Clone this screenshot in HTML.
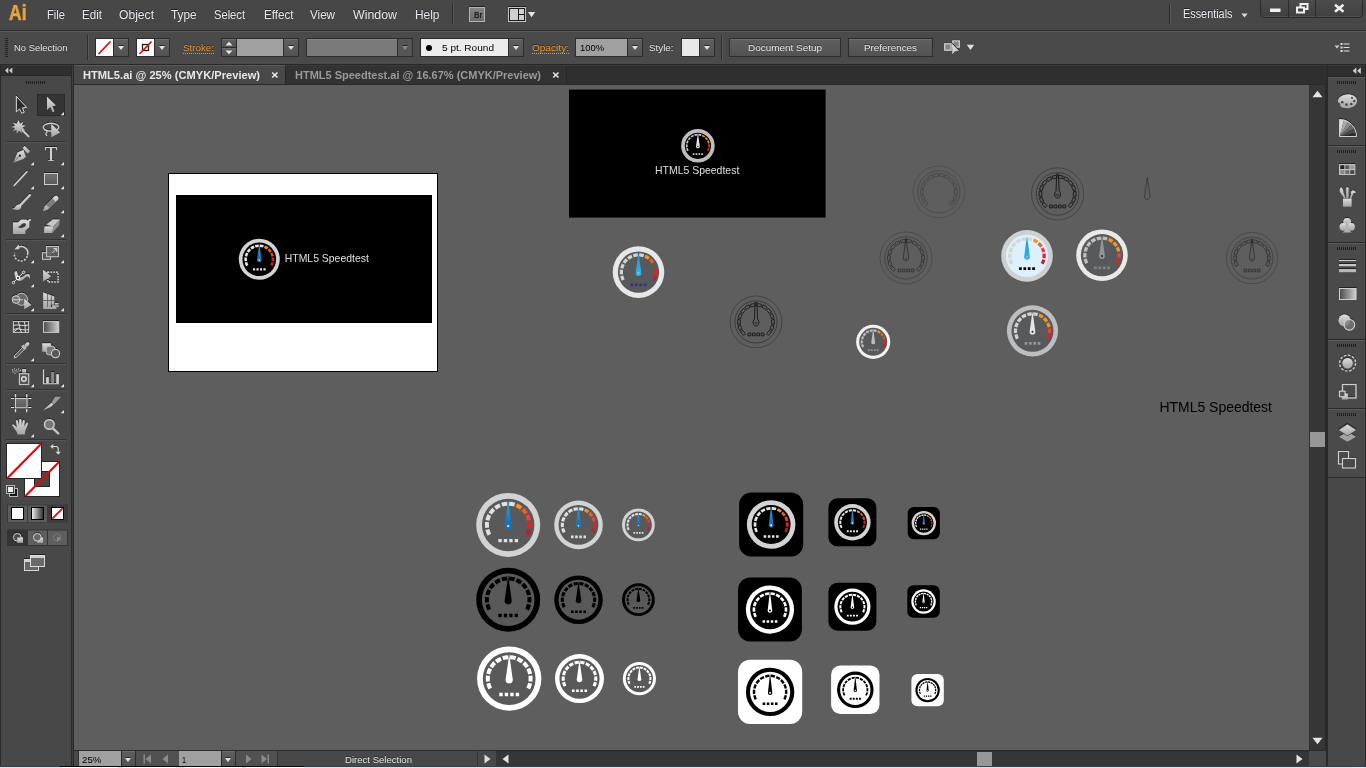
<!DOCTYPE html>
<html lang="en">
<head>
<meta charset="utf-8">
<title>Adobe Illustrator - HTML5.ai</title>
<style>
*{box-sizing:border-box;margin:0;padding:0}
html,body{width:1366px;height:768px;overflow:hidden;background:#484848}
body{font-family:"Liberation Sans",sans-serif;font-size:12px;color:#e6e6e6}
#app{position:relative;width:1366px;height:768px;overflow:hidden;background:#484848}
.abs{position:absolute}
.t{position:absolute;white-space:nowrap;line-height:1;transform-origin:0 0}
/* menu bar */
#menubar{position:absolute;left:0;top:0;width:1366px;height:30px;background:#474747}
#menubar .mi{position:absolute;top:8px;font-size:12px;color:#e6eaf0;text-shadow:0 -1px 0 rgba(20,20,20,.7);white-space:nowrap;line-height:14px;transform-origin:0 50%}
#ailogo{position:absolute;left:8.5px;top:1px;font-size:21.5px;font-weight:bold;line-height:24px;color:#eaa53f;transform-origin:0 0;-webkit-text-stroke:.7px #e39a33;text-shadow:0 -1px 0 #2c2c2c}
.vsep{position:absolute;width:2px;border-left:1px solid #2e2e2e;border-right:1px solid #565656}
/* control bar */
#ctrlbar{position:absolute;left:0;top:30px;width:1366px;height:35px;background:#4a4a4a;border-top:1px solid #2b2b2b;border-bottom:1px solid #282828;box-shadow:inset 0 1px 0 #5c5c5c}
.btn{position:absolute;border:1px solid #2c2c2c;background:linear-gradient(#5f5f5f,#525252);box-shadow:inset 0 1px 0 #6c6c6c}
.field{position:absolute;border:1px solid #2c2c2c}
.lbl{position:absolute;font-size:9.7px;text-shadow:0 -1px 0 rgba(20,20,20,.6);line-height:12px;white-space:nowrap;color:#e2e6ea;transform-origin:0 50%}
.lbl.or{color:#e8962e}
.tri{position:absolute;width:0;height:0;margin-left:.5px;border-left:3.5px solid transparent;border-right:3.5px solid transparent;border-top:4.5px solid #e2e2e2;filter:drop-shadow(0 -1px 0 #2a2a2a)}
/* tab bar */
#tabbar{position:absolute;left:74px;top:65px;width:1252px;height:20px;background:#2f2f2f;border-top:1px solid #3a3a3a;border-bottom:1px solid #2a2a2a}
.tab{position:absolute;top:0;height:20px}
/* canvas */
#canvas{position:absolute;left:74px;top:85px;width:1235px;height:665px;background:#5e5e5e;overflow:hidden}
#canvas svg{position:absolute;left:0;top:0}

.lbl.dk{color:#000;text-shadow:none}

</style>
</head>
<body>
<div id="app">
<!-- ======= MENU BAR ======= -->
<div id="menubar">
  <div id="ailogo" style="left:8.5px;transform:scaleX(0.8140)">Ai</div>
  <div class="mi" style="left:47px;transform:scaleX(0.9305)">File</div>
  <div class="mi" style="left:82px;transform:scaleX(0.9668)">Edit</div>
  <div class="mi" style="left:119px;transform:scaleX(1.0090)">Object</div>
  <div class="mi" style="left:171px;transform:scaleX(0.9802)">Type</div>
  <div class="mi" style="left:214px;transform:scaleX(0.9293)">Select</div>
  <div class="mi" style="left:263.5px;transform:scaleX(0.9682)">Effect</div>
  <div class="mi" style="left:310px;transform:scaleX(0.9691)">View</div>
  <div class="mi" style="left:353px;transform:scaleX(1.0307)">Window</div>
  <div class="mi" style="left:414.5px;transform:scaleX(0.9924)">Help</div>
  <div class="vsep" style="left:452px;top:4px;height:20px"></div>
  <div class="abs" id="brbtn" style="left:469px;top:7px;width:16px;height:15px;border:1px solid #b4b4b4;background:linear-gradient(#858585,#6a6a6a);box-shadow:0 -1px 0 #222"><span class="t" style="left:3.500px;top:3px;font-size:8.500px;font-weight:bold;color:#1c1c1c;transform:scaleX(0.8992)">Br</span></div>
  <svg class="abs" style="left:507px;top:5px" width="30" height="18" viewBox="0 0 30 18">
    <rect x="1" y="1" width="18" height="1" fill="#222"/>
    <rect x="1.500" y="2.500" width="17" height="14" fill="#1a1a1a" stroke="#c4c4c4" stroke-width="1"/>
    <rect x="3" y="4" width="8" height="11" fill="#cfcfcf"/>
    <rect x="12" y="4" width="5" height="5" fill="#cfcfcf"/>
    <rect x="12" y="10" width="5" height="5" fill="#cfcfcf"/>
    <path d="M21 7h7.200l-3.600 5.200z" fill="#e6e6e6"/>
  </svg>
  <div class="vsep" style="left:1169px;top:4px;height:20px"></div>
  <div class="mi" style="left:1182.5px;top:7px;transform:scaleX(0.9049)">Essentials</div>
  <svg class="abs" style="left:1241px;top:13px" width="7" height="5" viewBox="0 0 7 5"><path d="M0.3 0.5h6.4L3.5 4.5z" fill="#d8d8d8"/></svg>
  <!-- window buttons -->
  <div class="abs" id="winbtns" style="left:1260px;top:-1px;width:103px;height:19px;border:1px solid #2a2a2a;border-radius:0 0 4px 4px;background:linear-gradient(#4d4d4d,#3f3f3f);box-shadow:inset 0 -1px 0 #505050"></div>
  <div class="abs" style="left:1288px;top:0;width:1px;height:17px;background:#2a2a2a"></div>
  <div class="abs" style="left:1315px;top:0;width:1px;height:17px;background:#2a2a2a"></div>
  <svg class="abs" style="left:1260px;top:0" width="103" height="18" viewBox="0 0 103 18">
    <rect x="10" y="8.5" width="10.5" height="3.5" fill="#f0f0f0"/>
    <g fill="none" stroke="#f0f0f0" stroke-width="2"><rect x="40.5" y="4" width="7" height="5"/><rect x="37" y="7.5" width="7" height="5" fill="#464646"/></g>
    <path d="M75 4.800l8.500 7M83.500 4.800l-8.500 7" stroke="#f0f0f0" stroke-width="2.500" fill="none"/>
  </svg>
</div>

<!-- ======= CONTROL BAR ======= -->
<div id="ctrlbar">
  <svg class="abs" style="left:4px;top:6px" width="5" height="22" viewBox="0 0 5 22"><g fill="#232323"><rect x="1" y="1" width="3" height="1"/><rect x="1" y="3" width="3" height="1"/><rect x="1" y="5" width="3" height="1"/><rect x="1" y="7" width="3" height="1"/><rect x="1" y="9" width="3" height="1"/><rect x="1" y="11" width="3" height="1"/><rect x="1" y="13" width="3" height="1"/><rect x="1" y="15" width="3" height="1"/><rect x="1" y="17" width="3" height="1"/><rect x="1" y="19" width="3" height="1"/></g></svg>
  <div class="lbl" style="left:14px;top:11px;transform:scaleX(0.9738)">No Selection</div>
  <div class="vsep" style="left:87px;top:4px;height:25px"></div>
  <!-- fill swatch -->
  <div class="field" style="left:95px;top:7px;width:19px;height:19px;background:#fff"></div>
  <svg class="abs" style="left:96px;top:8px" width="17" height="17" viewBox="0 0 17 17"><path d="M2.5 15L14.5 2.5" stroke="#f00808" stroke-width="1.8"/></svg>
  <div class="btn" style="left:113px;top:7px;width:16px;height:19px"></div><div class="tri" style="left:117px;top:15px"></div>
  <!-- stroke swatch -->
  <div class="field" style="left:136px;top:7px;width:19px;height:19px;background:#fff"></div>
  <svg class="abs" style="left:137px;top:8px" width="17" height="17" viewBox="0 0 17 17"><rect x="5.5" y="5.5" width="6" height="6" fill="none" stroke="#222" stroke-width="1.3"/><path d="M2.5 15L14.5 2.5" stroke="#f00808" stroke-width="1.8"/></svg>
  <div class="btn" style="left:154px;top:7px;width:16px;height:19px"></div><div class="tri" style="left:158px;top:15px"></div>
  <div class="lbl or" style="left:183px;top:11px;transform:scaleX(1.0097)">Stroke:</div>
  <div class="abs" style="left:183px;top:22px;width:31px;height:0;border-top:1px dotted #e8962e"></div>
  <!-- spinner -->
  <div class="btn" style="left:221px;top:7px;width:16px;height:10px"></div>
  <div class="btn" style="left:221px;top:16px;width:16px;height:10px"></div>
  <svg class="abs" style="left:225px;top:10px" width="8" height="14" viewBox="0 0 8 14"><path d="M0.5 4.5h7L4 0.8z M0.5 9.5h7L4 13.2z" fill="#e6e6e6"/></svg>
  <div class="field" style="left:236px;top:7px;width:48px;height:19px;background:#a0a0a0"></div>
  <div class="btn" style="left:283px;top:7px;width:16px;height:19px"></div><div class="tri" style="left:287px;top:15px"></div>
  <!-- variable width profile (disabled) -->
  <div class="field" style="left:306px;top:7px;width:92px;height:19px;background:#7a7a7a;box-shadow:inset 0 1px 0 #868686"></div>
  <div class="btn" style="left:397px;top:7px;width:16px;height:19px;background:#555;box-shadow:none"></div><div class="tri" style="left:401px;top:15px;border-top-color:#8a8a8a"></div>
  <!-- brush definition -->
  <div class="field" style="left:420px;top:7px;width:89px;height:19px;background:#ececec"></div>
  <div class="abs" style="left:426px;top:13.5px;width:6px;height:6px;border-radius:50%;background:#000"></div>
  <div class="lbl dk" style="left:442px;top:11px;transform:scaleX(1.0381)">5 pt. Round</div>
  <div class="btn" style="left:508px;top:7px;width:16px;height:19px"></div><div class="tri" style="left:512px;top:15px"></div>
  <div class="lbl or" style="left:532px;top:11px;transform:scaleX(1.0409)">Opacity:</div>
  <div class="abs" style="left:532px;top:22px;width:37px;height:0;border-top:1px dotted #e8962e"></div>
  <div class="field" style="left:575px;top:7px;width:53px;height:19px;background:#a0a0a0"></div>
  <div class="lbl dk" style="left:579.5px;top:11px;transform:scaleX(0.9685)">100%</div>
  <div class="btn" style="left:627px;top:7px;width:16px;height:19px"></div><div class="tri" style="left:631px;top:15px"></div>
  <div class="lbl" style="left:648.5px;top:11px;transform:scaleX(1.0110)">Style:</div>
  <div class="field" style="left:681px;top:7px;width:19px;height:19px;background:#e8e8e8"></div>
  <div class="btn" style="left:699px;top:7px;width:16px;height:19px"></div><div class="tri" style="left:703px;top:15px"></div>
  <div class="vsep" style="left:721px;top:4px;height:25px"></div>
  <div class="btn" style="left:729px;top:7px;width:112px;height:19px"></div>
  <div class="lbl" style="left:748px;top:11px;transform:scaleX(1.0253)">Document Setup</div>
  <div class="btn" style="left:848px;top:7px;width:85px;height:19px"></div>
  <div class="lbl" style="left:864px;top:11px;transform:scaleX(1.0147)">Preferences</div>
  <svg class="abs" style="left:943px;top:8px" width="20" height="17" viewBox="0 0 20 17">
    <rect x="1.700" y="3.800" width="6.400" height="1" fill="#222"/><rect x="9.800" y="0.900" width="6.500" height="1" fill="#222"/>
    <rect x="1.700" y="4.800" width="6.400" height="6.400" fill="#858585" stroke="#d4d4d4" stroke-width="1.200"/>
    <rect x="9.800" y="1.900" width="6.500" height="6.300" fill="#858585" stroke="#d4d4d4" stroke-width="1.200"/>
    <path d="M9.100 4.200L9.300 15.200L12 12.300L16.200 11.500Z" fill="#d2d2d2"/>
    <path d="M9.100 4.200L16.200 11.500" stroke="#1c1c1c" stroke-width="1" fill="none"/>
  </svg>
  <svg class="abs" style="left:966px;top:12.800px" width="9" height="7" viewBox="0 0 9 7"><path d="M0.8 0.8h7.4L4.5 6z" fill="#e0e0e0"/></svg>
  <svg class="abs" style="left:1334px;top:11px" width="17" height="11" viewBox="0 0 17 11"><path d="M0.5 3.5h5L3 6.5z" fill="#d0d0d0"/><g fill="#dcdcdc"><rect x="6.5" y="1" width="2" height="2"/><rect x="9.5" y="1.5" width="6" height="1"/><rect x="6.5" y="4.5" width="2" height="2"/><rect x="9.5" y="5" width="6" height="1"/><rect x="6.5" y="8" width="2" height="2"/><rect x="9.5" y="8.5" width="6" height="1"/></g></svg>
</div>

<!-- ======= DOCUMENT TABS ======= -->
<div id="tabbar">
  <div class="tab" style="left:0;width:212px;background:#484848;border-right:1px solid #262626;top:-1px;height:19px;border-top:1px solid #5a5a5a"></div>
  <div class="t" style="left:9px;top:4px;font-size:10.500px;font-weight:bold;color:#e8e8e8;transform:scaleX(1.0586)">HTML5.ai @ 25% (CMYK/Preview)</div>
  <svg class="abs" style="left:197px;top:5px" width="8" height="8" viewBox="0 0 8 8"><path d="M1.2 1.5l5.3 5M6.500 1.5l-5.300 5" stroke="#ececec" stroke-width="1.6"/></svg>
  <div class="tab" style="left:212px;width:281px;background:#323232;border-right:1px solid #262626;top:0;height:18px"></div>
  <div class="t" style="left:221px;top:4px;font-size:10.500px;font-weight:bold;color:#9a9a9a;transform:scaleX(1.0472)">HTML5 Speedtest.ai @ 16.67% (CMYK/Preview)</div>
  <svg class="abs" style="left:478px;top:5px" width="8" height="8" viewBox="0 0 8 8"><path d="M1.2 1.5l5.300 5M6.500 1.5l-5.300 5" stroke="#e4e4e4" stroke-width="1.6"/></svg>
</div>

<!-- ======= SCROLLBARS / STATUS ======= -->
<div class="abs" id="vscroll" style="left:1309px;top:85px;width:17px;height:665px;background:#363636;border-left:1px solid #2e2e2e;border-right:1px solid #2a2a2a"></div>
<svg class="abs" style="left:1312px;top:90px" width="11" height="8" viewBox="0 0 11 8"><path d="M0.5 7.2h10L5.5 0.8z" fill="#e4e4e4"/></svg>
<svg class="abs" style="left:1312px;top:737px" width="11" height="8" viewBox="0 0 11 8"><path d="M0.5 0.8h10L5.5 7.2z" fill="#e4e4e4"/></svg>
<div class="abs" style="left:1310px;top:432px;width:15px;height:15px;background:#979797"></div>

<div class="abs" id="statusbar" style="left:74px;top:750px;width:1252px;height:16px;background:#484848;border-top:1px solid #2c2c2c"></div>
<div class="abs" style="left:78px;top:751px;width:43px;height:15px;background:#a0a0a0;border-left:1px solid #333"></div>
<div class="lbl dk" style="left:82px;top:754px;transform:scaleX(1.0056)">25%</div>
<div class="btn" style="left:121px;top:750px;width:15px;height:17px"></div><div class="tri" style="left:124px;top:758px"></div>
<div class="abs" style="left:136px;top:751px;width:43px;height:15px;background:#515151"></div>
<svg class="abs" style="left:143px;top:754px" width="30" height="10" viewBox="0 0 30 10"><g fill="#8a8a8a"><rect x="0.5" y="0.5" width="1.5" height="9"/><path d="M8 0.5v9L2.5 5z"/><path d="M25 0.5v9L19.5 5z"/></g></svg>
<div class="abs" style="left:179px;top:751px;width:42px;height:15px;background:#a0a0a0"></div>
<div class="lbl dk" style="left:182px;top:754px;transform:scaleX(0.7420)">1</div>
<div class="btn" style="left:221px;top:750px;width:15px;height:17px"></div><div class="tri" style="left:224px;top:758px"></div>
<div class="abs" style="left:236px;top:751px;width:42px;height:15px;background:#515151;border-right:1px solid #333"></div>
<svg class="abs" style="left:245px;top:754px" width="30" height="10" viewBox="0 0 30 10"><g fill="#8a8a8a"><path d="M1 0.5v9L6.5 5z"/><path d="M16.5 0.5v9L22 5z"/><rect x="22.5" y="0.5" width="1.5" height="9"/></g></svg>
<div class="lbl" style="left:344.5px;top:754px;transform:scaleX(0.9876)">Direct Selection</div>
<div class="abs" style="left:477px;top:751px;width:1px;height:15px;background:#333"></div>
<svg class="abs" style="left:484px;top:754px" width="7" height="10" viewBox="0 0 7 10"><path d="M0.5 0.5v9L6.5 5z" fill="#dcdcdc"/></svg>
<div class="abs" id="hscroll" style="left:496px;top:751px;width:813px;height:15px;background:#363636;border-top:1px solid #303030"></div>
<svg class="abs" style="left:502px;top:754px" width="7" height="10" viewBox="0 0 7 10"><path d="M6.5 0.5v9L0.5 5z" fill="#e4e4e4"/></svg>
<svg class="abs" style="left:1296px;top:754px" width="7" height="10" viewBox="0 0 7 10"><path d="M0.5 0.5v9L6.5 5z" fill="#e4e4e4"/></svg>
<div class="abs" style="left:977px;top:752px;width:15px;height:14px;background:#979797"></div>
<div class="abs" style="left:1309px;top:751px;width:16px;height:15px;background:#4a4a4a"></div>

<!-- bottom 2px strip (window edge) -->
<div class="abs" style="left:0;top:766px;width:1366px;height:1px;background:#36414e"></div>
<div class="abs" style="left:0;top:767px;width:1366px;height:1px;background:#d4e4f6"></div>
<div class="abs" style="left:60px;top:766px;width:244px;height:1px;background:#0a0a0a"></div>
<div class="abs" style="left:60.5px;top:767px;width:57.5px;height:1px;background:#fff"></div>
<div class="abs" style="left:122.5px;top:767px;width:53.5px;height:1px;background:#fff"></div>
<div class="abs" style="left:183.5px;top:767px;width:58.5px;height:1px;background:#fff"></div>
<div class="abs" style="left:246px;top:767px;width:57.500px;height:1px;background:#fff"></div>
<div class="abs" style="left:1352px;top:767px;width:13px;height:1px;background:#e8e8e8"></div>

<!-- ======= TOOLS PANEL ======= -->
<div class="abs" id="toolpanel" style="left:0;top:65px;width:74px;height:701px;background:#484848;border-left:1px solid #2a2a2a"></div>
<div class="abs" style="left:71px;top:65px;width:3px;height:701px;background:#2a2a2a"></div>
<div class="abs" style="left:72px;top:65px;width:1px;height:701px;background:#3e3e3e"></div>
<div class="abs" style="left:1px;top:65px;width:70px;height:11px;background:#2f2f2f;border-top:1px solid #3a3a3a;border-bottom:1px solid #282828"></div>
<svg class="abs" id="toolsvg" style="left:0;top:0" width="74" height="600" viewBox="0 0 74 600">
  <defs>
    <linearGradient id="gi" x1="0" y1="0" x2="0" y2="1"><stop offset="0" stop-color="#dcdcdc"/><stop offset="1" stop-color="#a4a4a4"/></linearGradient>
    <linearGradient id="gd" x1="0" y1="0" x2="0" y2="1"><stop offset="0" stop-color="#727272"/><stop offset="1" stop-color="#5a5a5a"/></linearGradient>
    <linearGradient id="gh" x1="0" y1="0" x2="1" y2="0"><stop offset="0" stop-color="#4a4a4a"/><stop offset="1" stop-color="#d0d0d0"/></linearGradient>
    <linearGradient id="gw" x1="0" y1="0" x2="1" y2="0"><stop offset="0" stop-color="#f4f4f4"/><stop offset="1" stop-color="#2a2a2a"/></linearGradient>
    <filter id="sh" x="-10%" y="-10%" width="120%" height="120%"><feDropShadow dx="0" dy="-1" stdDeviation="0" flood-color="#1c1c1c" flood-opacity="0.9"/></filter>
  </defs>
  <!-- collapse arrows + grip -->
  <path d="M8.3 67.5v6L5 70.5z M12.3 67.5v6L9 70.5z" fill="#d0d0d0"/>
  <g fill="#202020"><rect x="26" y="81" width="1" height="3"/><rect x="28" y="81" width="1" height="3"/><rect x="30" y="81" width="1" height="3"/><rect x="32" y="81" width="1" height="3"/><rect x="34" y="81" width="1" height="3"/><rect x="36" y="81" width="1" height="3"/><rect x="38" y="81" width="1" height="3"/><rect x="40" y="81" width="1" height="3"/><rect x="42" y="81" width="1" height="3"/><rect x="44" y="81" width="1" height="3"/></g>
  <!-- selected tool bg -->
  <rect x="37.5" y="94.5" width="27" height="21" fill="#343434" stroke="#2a2a2a"/>
  <!-- separators -->
  <g id="tsep"><path d="M6 141.5h60M6 239.5h60M6 313.5h60M6 363.5h60M6 389.5h60M6 439.5h60" stroke="#333" stroke-width="1"/><path d="M6 142.5h60M6 240.5h60M6 314.5h60M6 364.5h60M6 390.5h60M6 440.5h60" stroke="#555" stroke-width="1"/></g>
  <!-- flyout triangles -->
  <g fill="#e8e8e8" id="fly">
    <path d="M64 112v3.3h-3.3z"/>
    <path d="M34 162v3.3h-3.3z M64 162v3.3h-3.3z"/>
    <path d="M34 186v3.3h-3.3z M64 186v3.3h-3.3z"/>
    <path d="M64 210v3.3h-3.3z"/>
    <path d="M64 234v3.3h-3.3z"/>
    <path d="M34 260v3.3h-3.3z M64 260v3.3h-3.3z"/>
    <path d="M34 284v3.3h-3.3z"/>
    <path d="M34 308v3.3h-3.3z M64 308v3.3h-3.3z"/>
    <path d="M34 358v3.3h-3.3z"/>
    <path d="M34 384v3.3h-3.3z M64 384v3.3h-3.3z"/>
    <path d="M64 410v3.3h-3.3z"/>
    <path d="M34 434v3.3h-3.3z"/>
  </g>
  <g filter="url(#sh)">
  <!-- row1: selection, direct selection -->
  <path d="M16.4 96.3V111.8L19.6 108.9L21.8 113.4L24.3 112.2L22.2 107.9L26.6 107.4Z" fill="#2c2c2c" stroke="#d4d4d4" stroke-width="1" stroke-linejoin="miter"/>
  </g>
  <path d="M47 96.8V110L50.3 107L52.6 112.3L54.6 111.4L52.4 106.3L56 105.6Z" fill="url(#gi)"/>
  <g filter="url(#sh)">
  <!-- row2: magic wand, lasso -->
  <path d="M18.7 120.2l1.2 3.7 3.3-2.2-1.3 3.6 3.9.1-3.3 2.1 2.7 2.7-3.8-.6.2 3.9-2.5-3-2.3 3.2-.2-3.9-3.7 1.1 2.3-3-3.8-1 3.7-1.100-2.100-3.300 3.600 1.400z" fill="url(#gi)"/>
  <path d="M22.5 130.2l6 6.200" stroke="#c4c4c4" stroke-width="2" stroke-linecap="round"/>
  <ellipse cx="51" cy="127.300" rx="7.800" ry="3.900" fill="none" stroke="#cfcfcf" stroke-width="1.200"/>
  <path d="M44.500 130.300c2.500-.5 3.200 1.500 1.700 2.800-1 .9.300 2.300 1 2.600" fill="none" stroke="#cfcfcf" stroke-width="1.100"/>
  <path d="M51.300 124v13.200l8.800-4.800z" fill="url(#gi)"/>
  <!-- row3: pen, type -->
  <path d="M13.300 162.800l4.300-10.200 5.800-2.500 2.400 6.600-2.400 2.300z" fill="url(#gi)"/>
  <path d="M24.600 145.900l5.400 5.400-2.300 2.400-5-5.500z" fill="url(#gi)"/>
  <path d="M13.600 162.400l5.800-6.400" stroke="#555" stroke-width=".7"/>
  <circle cx="19.900" cy="155.700" r="1.100" fill="#222"/>
  <!-- row4: line, rect -->
  <path d="M14.200 185.600L27 171.800" stroke="#d0d0d0" stroke-width="1.500" stroke-linecap="round"/>
  <rect x="44.500" y="173.500" width="13" height="11" fill="url(#gd)" stroke="#cacaca" stroke-width="1"/>
  <!-- row5: brush, pencil -->
  <path d="M29.900 195.200L20.800 204.800" stroke="#c8c8c8" stroke-width="2.300" stroke-linecap="round"/>
  <path d="M20.900 204.800c-2.500-.8-4.700.8-5.600 2.300-.8 1.200-2 1.400-3.200 1.400 1.800 1.600 5.300 1.800 7.400 1 1.800-.900 2.100-3.100 1.400-4.700z" fill="url(#gi)"/>
  <path d="M43 211.200l1.700-4.700 9.700-10c1.100-1.100 2.700-.800 3.500.2.700.900.800 2.200-.200 3.200l-10 9.600z" fill="url(#gi)"/>
  <path d="M46 204.800l3.500 3.300 6.300-6.100-3.400-3.500z" fill="#7c7c7c"/>
  <!-- row6: blob brush, eraser -->
  <path d="M13 222.500h5l3-2.800h5.500l2.800 2.500v5l-4 3.600v3.200H13z" fill="url(#gi)"/>
  <path d="M30.600 219.300l-5.100 4.600" stroke="#d8d8d8" stroke-width="1.700"/>
  <path d="M25.700 223.500c-2-.5-3.600.2-4.700 1.500-.9 1-2.200 1.700-3.500 1.900 1.700 1.300 4.700 1.400 6.700.2 1.600-.9 2.100-2.400 1.500-3.600z" fill="#3a3a3a"/>
  <path d="M46.300 224.600l6.700-5h7l-6.800 7z" fill="#c6c6c6"/>
  <path d="M43.800 232.900l.8-6.300 8.600-.2-.9 6.500z" fill="url(#gi)"/>
  <path d="M53.200 226.600l6.800-7-.9 5.700-6.800 7.600z" fill="#8e8e8e"/>
  <!-- row7: rotate, scale -->
  <path d="M17.500 247.800a6.500 6.500 0 0 1 9.900 7.500" fill="none" stroke="#cfcfcf" stroke-width="1.400"/>
  <path d="M27.200 256.300a6.500 6.500 0 0 1-12.600-3.600" fill="none" stroke="#cfcfcf" stroke-width="1.500" stroke-dasharray="1.800 1.500"/>
  <path d="M14.400 249.400l4.300-5 .7 4.700z" fill="#cfcfcf"/>
  <rect x="42.500" y="252.700" width="8" height="6.600" fill="#565656" stroke="#c8c8c8" stroke-width="1"/>
  <rect x="46.600" y="246.500" width="11.800" height="10.200" fill="url(#gd)" fill-opacity=".85" stroke="#c8c8c8" stroke-width="1"/>
  <path d="M52.300 253l4.200-4.200M53.500 248.600h3.200v3.200" fill="none" stroke="#d8d8d8" stroke-width="1"/>
  <!-- row8: width, free transform -->
  <path d="M14.500 273.500c.3-2.500 2.300-3 2.700-.8.500 2.600 1.300 4.700 3.300 4.700 3.300 0 4.700-3.300 7.500-3.300 1.900 0 2.300 2.300 1.900 5.200-.800-2.300-1.600-3-2.700-3-2 0-3.700 4.700-7.500 4.700-3.700 0-4.700-4.400-5.200-7.500z" fill="url(#gi)"/>
  <path d="M13.300 282.600L23.500 272.400" stroke="#f0f0f0" stroke-width=".9"/>
  <circle cx="13.400" cy="282.600" r="1.200" fill="#484848" stroke="#f0f0f0" stroke-width=".8"/>
  <circle cx="23.600" cy="272.300" r="1.200" fill="#484848" stroke="#f0f0f0" stroke-width=".8"/>
  <circle cx="18" cy="278" r="1.700" fill="#484848" stroke="#f8f8f8" stroke-width="1.100"/>
  <rect x="47.800" y="272.300" width="10.300" height="9.700" fill="none" stroke="#d8d8d8" stroke-width="1.400" stroke-dasharray="1.500 1.300"/>
  <path d="M43.100 269.700v11.800l8-5.300z" fill="url(#gi)"/>
  <!-- row9: shape builder, perspective grid -->
  <circle cx="21.500" cy="299.300" r="6" fill="#6a6a6a" stroke="#bdbdbd" stroke-width="1"/>
  <circle cx="16" cy="299.600" r="3.800" fill="#787878" stroke="#cfcfcf" stroke-width="1"/>
  <path d="M13.500 299.600h10" stroke="#f4f4f4" stroke-width="1.100" stroke-dasharray="1 1"/>
  <path d="M24.200 298.800v10.500l7.200-4.300z" fill="url(#gi)"/>
  <path d="M43.200 292.500l11 4v8.500h-3.500v2h5.700v2H43.200z" fill="url(#gi)"/>
  <path d="M47.600 294v13M51.300 295.500v9.500M43.200 300.500h11M54.200 303.300h4.600M50.800 305h7.500" stroke="#505050" stroke-width=".8" fill="none"/>
  <path d="M55 303l3.500 .1v1.500h-3.600z M52 305.500h6.800v1.300H52z" fill="#c8c8c8"/>
  <!-- row10: mesh, gradient -->
  <rect x="13.400" y="321.600" width="15.200" height="10.800" fill="#3e3e3e" stroke="#c8c8c8" stroke-width="1"/>
  <path d="M13.500 325.500c4-1.500 8 1 15 -.5M13.500 329.500c5-2 9 1.500 15 0M18 321.500c2 3 1 7 3.500 11M24 321.500c2 3.500.5 7 1.500 11M13.500 332l5-4" fill="none" stroke="#e0e0e0" stroke-width="1"/>
  <rect x="43.500" y="321.600" width="15.200" height="10.800" fill="url(#gh)" stroke="#c8c8c8" stroke-width="1"/>
  <!-- row11: eyedropper, blend -->
  <path d="M14.200 357.800l.5-2.200 8.300-8.500 1.900 1.800-8.500 8.400z" fill="#555" stroke="#d0d0d0" stroke-width=".9"/>
  <path d="M21.200 346.600l2.100-2.100 3.300 3.400-2 2z" fill="#bdbdbd"/>
  <path d="M24.300 345.200l2-2.300c1-1 2.400-.6 2.800.2.400.800.200 1.700-.5 2.400l-2.300 2z" fill="url(#gi)"/>
  <rect x="42.300" y="343.300" width="8.500" height="8.500" fill="url(#gi)"/>
  <rect x="46.300" y="346.300" width="8.500" height="8.500" rx="2.500" fill="#7a7a7a" stroke="#c4c4c4" stroke-width="1"/>
  <circle cx="55.500" cy="353.600" r="4.100" fill="#585858" stroke="#d0d0d0" stroke-width="1.100"/>
  <!-- row12: symbol sprayer, graph -->
  <rect x="19.400" y="373.800" width="9.300" height="10.800" fill="#555" stroke="#cfcfcf" stroke-width="1"/>
  <rect x="22.200" y="369.200" width="3.800" height="3.400" fill="url(#gi)"/>
  <circle cx="23.900" cy="379" r="2.300" fill="none" stroke="#dadada" stroke-width="1.500"/>
  
  <path d="M43.500 369.500v14.200h15.500" fill="none" stroke="#d4d4d4" stroke-width="1.100"/>
  <rect x="46.200" y="377.200" width="2.600" height="6" fill="#cfcfcf"/>
  <rect x="51.300" y="372" width="2.600" height="11.200" fill="#8a8a8a"/>
  <rect x="56.300" y="374.300" width="2.600" height="8.900" fill="#cfcfcf"/>
  <!-- row13: artboard, slice -->
  <rect x="15.500" y="398.500" width="11.500" height="9.200" fill="url(#gd)" stroke="#d0d0d0" stroke-width="1"/>
  <path d="M15.500 394v3.200M26.700 394v3.200M15.500 409v3.200M26.700 409v3.200M11 398.500h3.200M28.200 398.500h3.200M11 407.500h3.200M28.200 407.500h3.200" stroke="#e0e0e0" stroke-width="1.200"/>
  <path d="M43 409.900l8.500-7.200 1.800 1.800c-1 2.200-5 4.200-10.300 5.400z" fill="url(#gi)"/>
  <path d="M51.800 402.300l3.300-5.500h6l-7.200 7.600z" fill="#9a9a9a"/>
  <!-- row14: hand, zoom -->
  <path d="M17.700 434.600l-1.300-3.300-4-5.500c-.5-.9.700-1.800 1.600-1l3 2.700-1-6.300c-.2-1.200 1.500-1.500 1.800-.3l1.300 4.800.2-5.700c0-1.200 1.900-1.200 2 0l.4 5.600 1.200-4.800c.3-1.100 1.900-.8 1.800.3l-.6 5.700 2.200-3.600c.6-1 2.100-.3 1.700.8l-2.500 6.300-.8 4.300z" fill="url(#gi)"/>
  <circle cx="49.300" cy="424.500" r="4.800" fill="#777" stroke="#cdcdcd" stroke-width="1.400"/>
  <path d="M53 428.300l5.200 5" stroke="#c4c4c4" stroke-width="2.400" stroke-linecap="round"/>
  </g>
  <g fill="#e0e0e0"><rect x="12" y="369.500" width="1" height="1"/><rect x="14" y="368.500" width="1" height="1"/><rect x="16" y="369.500" width="1" height="1"/><rect x="18" y="368.500" width="1" height="1"/><rect x="12.500" y="371.500" width="1" height="1"/><rect x="14.500" y="370.500" width="1" height="1"/><rect x="16.500" y="371.500" width="1" height="1"/><rect x="18.500" y="370.500" width="1" height="1"/><rect x="20" y="369.800" width="1" height="1"/><rect x="14.500" y="372.800" width="1" height="1"/></g>
  <!-- T tool as real text -->
  <text x="51" y="161.200" text-anchor="middle" font-family="'Liberation Serif',serif" font-size="20.500" fill="#d2d2d2" filter="url(#sh)">T</text>

  <!-- fill / stroke swatches -->
  <rect x="24.500" y="461.500" width="35" height="35" fill="#fff" stroke="#262626"/>
  <rect x="34.500" y="471.500" width="15" height="15" fill="#484848" stroke="#262626"/>
  <path d="M25.500 496L59 462" stroke="#f80000" stroke-width="2.200"/>
  <rect x="6.500" y="443.500" width="35" height="35" fill="#fff" stroke="#262626"/>
  <path d="M7.500 478L41 444" stroke="#f80000" stroke-width="2.200"/>
  <!-- swap arrows -->
  <path d="M52.500 446.500h3.500c1.800 0 2.200 1 2.200 2.500v3.500" fill="none" stroke="#d8d8d8" stroke-width="1.100"/>
  <path d="M50.200 446.500l3-2.600v5.200z M58.200 454.700l-2.600-3h5.200z" fill="#d8d8d8"/>
  <!-- default fill/stroke -->
  <rect x="9.500" y="488.500" width="8" height="8" fill="#151515" stroke="#b8b8b8" stroke-width="1"/>
  <rect x="6.500" y="485.500" width="8" height="8" fill="#3a3a3a" stroke="#b8b8b8" stroke-width="1"/>
  <rect x="8" y="487" width="5" height="5" fill="#ececec"/>
  <!-- color / gradient / none -->
  <rect x="7" y="504.500" width="61" height="18" fill="#3a3a3a"/>
  <rect x="8" y="505.500" width="19" height="16.500" fill="#5c5c5c"/>
  <rect x="28" y="505.500" width="19" height="16.500" fill="#5c5c5c"/>
  <rect x="48" y="505.500" width="19" height="16.500" fill="#3c3c3c"/>
  <rect x="11.500" y="507.500" width="12" height="12" fill="#fff" stroke="#000" stroke-width="1"/>
  <rect x="31.500" y="507.500" width="12" height="12" fill="url(#gw)" stroke="#000" stroke-width="1"/>
  <rect x="51.500" y="507.500" width="12" height="12" fill="#fff" stroke="#000" stroke-width="1"/>
  <path d="M52.300 518.700L62.700 508.300" stroke="#f80000" stroke-width="1.800"/>
  <!-- drawing modes -->
  <rect x="7" y="529.500" width="61" height="16.500" fill="#343434"/>
  <rect x="28" y="530.500" width="19" height="14.500" fill="#5e5e5e"/>
  <rect x="48" y="530.500" width="19" height="14.500" fill="#5e5e5e"/>
  <g filter="url(#sh)">
  <circle cx="17.300" cy="537.300" r="3.800" fill="#4a4a4a" stroke="#c8c8c8" stroke-width="1"/>
  <rect x="17.200" y="537.500" width="5.800" height="5.300" fill="url(#gi)"/>
  <rect x="37.200" y="537.500" width="5.800" height="5.300" fill="url(#gi)"/>
  <circle cx="37.300" cy="537.300" r="3.800" fill="#666" stroke="#d0d0d0" stroke-width="1"/>
  </g>
  <circle cx="57" cy="537.300" r="3.600" fill="none" stroke="#7a7a7a" stroke-width="1"/>
  <path d="M57 537.300h3.600a3.600 3.600 0 0 1-3.600 3.600z" fill="#8a8a8a"/>
  <!-- screen mode -->
  <g filter="url(#sh)">
  <rect x="24.500" y="559.500" width="14" height="11" fill="#666" stroke="#d8d8d8" stroke-width="1"/>
  <rect x="30.500" y="555.500" width="14" height="11" fill="#6a6a6a" stroke="#dcdcdc" stroke-width="1"/>
  <rect x="31" y="556" width="13" height="2" fill="#cfcfcf"/>
  <rect x="25" y="560" width="5" height="2" fill="#cfcfcf"/>
  </g>
</svg>

<!-- ======= RIGHT DOCK ======= -->
<div class="abs" id="dock" style="left:1326px;top:65px;width:40px;height:701px;background:#484848;border-left:2px solid #2a2a2a;border-right:1px solid #2a2a2a"></div>
<div class="abs" style="left:1328px;top:65px;width:37px;height:12px;background:#2f2f2f;border-top:1px solid #3a3a3a;border-bottom:1px solid #262626"></div>
<div class="abs" style="left:1328px;top:77px;width:37px;height:69px;background:#4a4a4a;border-top:1px solid #5c5c5c;border-bottom:1px solid #2a2a2a"></div>
<div class="abs" style="left:1328px;top:146px;width:37px;height:97px;background:#4a4a4a;border-top:1px solid #5c5c5c;border-bottom:1px solid #2a2a2a"></div>
<div class="abs" style="left:1328px;top:243px;width:37px;height:97px;background:#4a4a4a;border-top:1px solid #5c5c5c;border-bottom:1px solid #2a2a2a"></div>
<div class="abs" style="left:1328px;top:340px;width:37px;height:69px;background:#4a4a4a;border-top:1px solid #5c5c5c;border-bottom:1px solid #2a2a2a"></div>
<div class="abs" style="left:1328px;top:409px;width:37px;height:69px;background:#4a4a4a;border-top:1px solid #5c5c5c;border-bottom:1px solid #2a2a2a"></div>
<svg class="abs" id="docksvg" style="left:0;top:0" width="1366" height="500" viewBox="0 0 1366 500">
  <path d="M1356.300 67.500v6.500l-3.600-3.250z M1360.800 67.500v6.500l-3.600-3.250z" fill="#d4d4d4"/>
  <g fill="#1e1e1e"><rect x="1337" y="81" width="1" height="3"/><rect x="1339" y="81" width="1" height="3"/><rect x="1341" y="81" width="1" height="3"/><rect x="1343" y="81" width="1" height="3"/><rect x="1345" y="81" width="1" height="3"/><rect x="1347" y="81" width="1" height="3"/><rect x="1349" y="81" width="1" height="3"/><rect x="1351" y="81" width="1" height="3"/><rect x="1353" y="81" width="1" height="3"/><rect x="1355" y="81" width="1" height="3"/><rect x="1337" y="150" width="1" height="3"/><rect x="1339" y="150" width="1" height="3"/><rect x="1341" y="150" width="1" height="3"/><rect x="1343" y="150" width="1" height="3"/><rect x="1345" y="150" width="1" height="3"/><rect x="1347" y="150" width="1" height="3"/><rect x="1349" y="150" width="1" height="3"/><rect x="1351" y="150" width="1" height="3"/><rect x="1353" y="150" width="1" height="3"/><rect x="1355" y="150" width="1" height="3"/><rect x="1337" y="247" width="1" height="3"/><rect x="1339" y="247" width="1" height="3"/><rect x="1341" y="247" width="1" height="3"/><rect x="1343" y="247" width="1" height="3"/><rect x="1345" y="247" width="1" height="3"/><rect x="1347" y="247" width="1" height="3"/><rect x="1349" y="247" width="1" height="3"/><rect x="1351" y="247" width="1" height="3"/><rect x="1353" y="247" width="1" height="3"/><rect x="1355" y="247" width="1" height="3"/><rect x="1337" y="344" width="1" height="3"/><rect x="1339" y="344" width="1" height="3"/><rect x="1341" y="344" width="1" height="3"/><rect x="1343" y="344" width="1" height="3"/><rect x="1345" y="344" width="1" height="3"/><rect x="1347" y="344" width="1" height="3"/><rect x="1349" y="344" width="1" height="3"/><rect x="1351" y="344" width="1" height="3"/><rect x="1353" y="344" width="1" height="3"/><rect x="1355" y="344" width="1" height="3"/><rect x="1337" y="413" width="1" height="3"/><rect x="1339" y="413" width="1" height="3"/><rect x="1341" y="413" width="1" height="3"/><rect x="1343" y="413" width="1" height="3"/><rect x="1345" y="413" width="1" height="3"/><rect x="1347" y="413" width="1" height="3"/><rect x="1349" y="413" width="1" height="3"/><rect x="1351" y="413" width="1" height="3"/><rect x="1353" y="413" width="1" height="3"/><rect x="1355" y="413" width="1" height="3"/></g>
  <g filter="url(#sh)">
  <!-- color -->
  <path d="M1338 101.500c0-4 4.500-7 10-7 5 0 9 2.600 9 6.400 0 4.100-4.600 7.300-10.300 7.300-2.200 0-4.300-.3-5.700-1.400-1.200-.900-.2-2.200-1-3.300-.7-.9-2-.8-2-2z" fill="url(#gi)"/>
  <g fill="#444"><circle cx="1342.200" cy="102.300" r="1.300"/><circle cx="1346.500" cy="104.600" r="1.300"/><circle cx="1351.300" cy="104" r="1.300"/><circle cx="1354.300" cy="101" r="1.200"/><circle cx="1352" cy="98" r="1.100"/></g>
  <!-- color guide -->
  <path d="M1339.500 136.500v-17a17 17 0 0 1 17 17z" fill="#2c2c2c"/>
  <path d="M1339.500 136.500v-17a17 17 0 0 1 4.500 .6z" fill="#d8d8d8"/>
  <path d="M1339.500 136.500l4.500-16.400a17 17 0 0 1 4.200 1.800z" fill="#aaa"/>
  <path d="M1339.500 136.500l8.700-14.600a17 17 0 0 1 3.500 2.700z" fill="#8a8a8a"/>
  <path d="M1339.500 136.500l12.200-11.900a17 17 0 0 1 2.700 3.600z" fill="#686868"/>
  <path d="M1339.500 136.500l14.900-8.300a17 17 0 0 1 1.600 4.200z" fill="#4a4a4a"/>
  <path d="M1339.500 136.500v-17a17 17 0 0 1 17 17z" fill="none" stroke="#d0d0d0" stroke-width="1"/>
  <!-- swatches -->
  <rect x="1339" y="164" width="16.300" height="11" fill="#bdbdbd"/>
  <rect x="1340.300" y="165.300" width="4" height="3.700" fill="#222"/><rect x="1345.300" y="165.300" width="4" height="3.700" fill="#5a5a5a"/><rect x="1350.300" y="165.300" width="4" height="3.700" fill="#999"/>
  <rect x="1340.300" y="170.200" width="4" height="3.700" fill="#888"/><rect x="1345.300" y="170.200" width="4" height="3.700" fill="#6a6a6a"/><rect x="1350.300" y="170.200" width="4" height="3.700" fill="#444"/>
  <!-- brushes -->
  <rect x="1343" y="198.700" width="8.600" height="8" fill="url(#gi)"/>
  <path d="M1346.300 198v-9.500c0-1.700 2.200-1.700 2.200 0v9.500z" fill="url(#gi)"/>
  <path d="M1344.300 198.500l-3.700-5.500c-1.500-2.300-.9-4.300.4-5.800 1 .5 2.500 2.500 2.400 5.300l2.200 5.500z" fill="url(#gi)"/>
  <path d="M1349.800 198.500l1.500-4.500c-.7-1.400-.4-2.700.9-3.300 1.700-.8 3.300.5 3.700 2.300-1.400-.6-2.800.3-3.200 1.700l-1.500 4z" fill="url(#gi)"/>
  <!-- symbols (club) -->
  <circle cx="1347.200" cy="221.800" r="3.900" fill="url(#gi)"/><circle cx="1343.400" cy="226.800" r="3.900" fill="url(#gi)"/><circle cx="1351" cy="226.800" r="3.900" fill="url(#gi)"/>
  <path d="M1346 224h2.400l.4 5c.2 1.500 1.600 2.800 3.200 3.400h-9.600c1.600-.6 3-1.900 3.200-3.400z" fill="#b0b0b0"/>
  <!-- stroke -->
  <rect x="1339" y="260" width="17" height="1" fill="#d0d0d0"/><rect x="1339" y="264" width="17" height="2.200" fill="#c8c8c8"/><rect x="1339" y="269" width="17" height="3.200" fill="#b8b8b8"/>
  <!-- gradient -->
  <rect x="1339.500" y="288.500" width="16.500" height="11" fill="url(#gh)" stroke="#cfcfcf" stroke-width="1"/>
  <!-- transparency -->
  <circle cx="1344.500" cy="320.500" r="6" fill="url(#gi)"/>
  <circle cx="1349.400" cy="324.800" r="5.300" fill="#7a7a7a" fill-opacity=".75" stroke="#d0d0d0" stroke-width="1.100"/>
  <!-- appearance -->
  <circle cx="1347.600" cy="363.200" r="5.200" fill="url(#gi)"/>
  <circle cx="1347.600" cy="363.200" r="8" fill="none" stroke="#d0d0d0" stroke-width="1.300" stroke-dasharray="2.600 1.600"/>
  <!-- graphic styles -->
  <rect x="1342.500" y="384.500" width="13.500" height="13.500" fill="none" stroke="#cfcfcf" stroke-width="1.200"/>
  <rect x="1341.800" y="393.600" width="6" height="6" fill="url(#gi)"/>
  <rect x="1339.500" y="391.200" width="5.500" height="5.500" fill="#555" stroke="#cfcfcf" stroke-width="1.100"/>
  <!-- layers -->
  <path d="M1339 436.800l8.500-5 8.500 5-8.500 5z" fill="#a2a2a2"/>
  <path d="M1339 430l8.500-5.500 8.500 5.500-8.500 5.500z" fill="url(#gi)" stroke="#484848" stroke-width="1.200" paint-order="stroke"/>
  <!-- artboards -->
  <rect x="1338.500" y="451.500" width="10" height="12.500" fill="#4a4a4a" stroke="#d0d0d0" stroke-width="1.100"/>
  <rect x="1342.500" y="458.500" width="13" height="9.500" fill="#4a4a4a" stroke="#d0d0d0" stroke-width="1.100"/>
  </g>
</svg>

<div id="canvas">
<svg width="1235" height="665" viewBox="74 85 1235 665" font-family="'Liberation Sans',sans-serif">
<defs><linearGradient id="ndl" x1="0" y1="0" x2="0" y2="1"><stop offset="0" stop-color="#27aae1"/><stop offset="0.7" stop-color="#1c75bc"/><stop offset="1" stop-color="#1b6cb3"/></linearGradient><linearGradient id="ndl2" x1="0" y1="0" x2="0" y2="1"><stop offset="0" stop-color="#1c8fd6"/><stop offset="1" stop-color="#35b4ea"/></linearGradient></defs>
<rect x="168.5" y="173.5" width="269" height="198" fill="#fff" stroke="#000" stroke-width="1"/>
<rect x="176" y="195" width="256" height="128" fill="#000"/>
<g transform="translate(259.3 259.3)"><circle r="20.5" fill="#d1d3d4"/><circle r="16.81" fill="#000"/><path d="M-12.08 6.32A13.63 13.63 0 0 1 -13.31 2.93M-13.51 1.8A13.63 13.63 0 0 1 -13.51 -1.8M-13.31 -2.93A13.63 13.63 0 0 1 -12.08 -6.32M-11.51 -7.3A13.63 13.63 0 0 1 -9.19 -10.07M-8.32 -10.8A13.63 13.63 0 0 1 -5.19 -12.6M-4.12 -12.99A13.63 13.63 0 0 1 -0.57 -13.62M0.57 -13.62A13.63 13.63 0 0 1 4.12 -12.99" fill="none" stroke="#e6e7e8" stroke-width="2.56"/><path d="M5.19 -12.6A13.63 13.63 0 0 1 8.32 -10.8" fill="none" stroke="#f7941e" stroke-width="2.56"/><path d="M9.19 -10.07A13.63 13.63 0 0 1 11.51 -7.3" fill="none" stroke="#f15a29" stroke-width="2.56"/><path d="M12.08 -6.32A13.63 13.63 0 0 1 13.31 -2.93" fill="none" stroke="#ef4136" stroke-width="2.56"/><path d="M13.51 -1.8A13.63 13.63 0 0 1 13.51 1.8" fill="none" stroke="#ed1c24" stroke-width="2.56"/><path d="M13.31 2.93A13.63 13.63 0 0 1 12.08 6.32" fill="none" stroke="#be1e2d" stroke-width="2.56"/><path d="M-6.3 9.02h2.15v2.15h-2.15zM-2.82 9.02h2.15v2.15h-2.15zM0.67 9.02h2.15v2.15h-2.15zM4.15 9.02h2.15v2.15h-2.15z" fill="#e6e7e8"/><path d="M0 -15.58L2.3 0.72A2.3 2.3 0 1 1 -2.3 0.72Z" fill="url(#ndl)"/><circle cy="0.72" r="0.82" fill="#fff"/></g>
<text x="284.8" y="262.3" font-size="11.6" fill="#e0e0e0" textLength="84" lengthAdjust="spacingAndGlyphs" opacity=".99">HTML5 Speedtest</text>
<rect x="569" y="89.6" width="256.6" height="128" fill="#000"/>
<g transform="translate(697.9 145.8)"><circle r="16.8" fill="#bcbec0"/><circle r="13.1" fill="#000"/><path d="M-9.9 5.18A11.17 11.17 0 0 1 -10.91 2.4M-11.07 1.48A11.17 11.17 0 0 1 -11.07 -1.48M-10.91 -2.4A11.17 11.17 0 0 1 -9.9 -5.18M-9.43 -5.99A11.17 11.17 0 0 1 -7.53 -8.25M-6.82 -8.85A11.17 11.17 0 0 1 -4.26 -10.33M-3.38 -10.65A11.17 11.17 0 0 1 -0.47 -11.16M0.47 -11.16A11.17 11.17 0 0 1 3.38 -10.65" fill="none" stroke="#c4c6c8" stroke-width="1.68"/><path d="M4.26 -10.33A11.17 11.17 0 0 1 6.82 -8.85" fill="none" stroke="#f7941e" stroke-width="1.68"/><path d="M7.53 -8.25A11.17 11.17 0 0 1 9.43 -5.99" fill="none" stroke="#f7941e" stroke-width="1.68"/><path d="M9.9 -5.18A11.17 11.17 0 0 1 10.91 -2.4" fill="none" stroke="#f7941e" stroke-width="1.68"/><path d="M11.07 -1.48A11.17 11.17 0 0 1 11.07 1.48" fill="none" stroke="#ef4136" stroke-width="1.68"/><path d="M10.91 2.4A11.17 11.17 0 0 1 9.9 5.18" fill="none" stroke="#ed1c24" stroke-width="1.68"/><path d="M-5.17 7.39h1.76v1.76h-1.76zM-2.31 7.39h1.76v1.76h-1.76zM0.55 7.39h1.76v1.76h-1.76zM3.4 7.39h1.76v1.76h-1.76z" fill="#c4c6c8"/><path d="M0 -12.77L1.88 0.59A1.88 1.88 0 1 1 -1.88 0.59Z" fill="#e6e7e8"/><circle cy="0.59" r="0.67" fill="#000"/></g>
<text x="655" y="173.8" font-size="11.6" fill="#e0e0e0" textLength="84.3" lengthAdjust="spacingAndGlyphs" opacity=".99">HTML5 Speedtest</text>
<g transform="translate(638.5 272.1)"><circle r="25.8" fill="#e6e7e8"/><circle r="20.64" fill="#58595b"/><path d="M-15.2 7.95A17.16 17.16 0 0 1 -16.76 3.68M-17.01 2.27A17.16 17.16 0 0 1 -17.01 -2.27M-16.76 -3.68A17.16 17.16 0 0 1 -15.2 -7.95M-14.49 -9.19A17.16 17.16 0 0 1 -11.57 -12.67M-10.47 -13.59A17.16 17.16 0 0 1 -6.54 -15.86M-5.19 -16.35A17.16 17.16 0 0 1 -0.72 -17.14M0.72 -17.14A17.16 17.16 0 0 1 5.19 -16.35" fill="none" stroke="#d1d3d4" stroke-width="3.23"/><path d="M6.54 -15.86A17.16 17.16 0 0 1 10.47 -13.59" fill="none" stroke="#f7941e" stroke-width="3.23"/><path d="M11.57 -12.67A17.16 17.16 0 0 1 14.49 -9.19" fill="none" stroke="#f15a29" stroke-width="3.23"/><path d="M17.01 -2.27A17.16 17.16 0 0 1 17.01 2.27" fill="none" stroke="#ed1c24" stroke-width="3.23"/><path d="M16.76 3.68A17.16 17.16 0 0 1 15.2 7.95" fill="none" stroke="#be1e2d" stroke-width="3.23"/><path d="M-7.93 11.35h2.71v2.71h-2.71zM-3.55 11.35h2.71v2.71h-2.71zM0.84 11.35h2.71v2.71h-2.71zM5.22 11.35h2.71v2.71h-2.71z" fill="#2e3192"/><path d="M0 -19.61L2.89 0.9A2.89 2.89 0 1 1 -2.89 0.9Z" fill="url(#ndl2)"/><circle cy="0.9" r="1.03" fill="#7fd0f0"/></g>
<g transform="translate(756 321.9)" fill="none" stroke="#1e1e1e" stroke-width="1.0" opacity="1"><circle r="25.9" stroke="#333" stroke-width="0.6"/><circle r="21.11" stroke="#333" stroke-width="0.78"/><path d="M-12.42 13.56A18.39 18.39 0 0 1 -15.51 9.88L-13.22 8.42A15.67 15.67 0 0 0 -10.59 11.55ZM-16.31 8.49A18.39 18.39 0 0 1 -17.95 3.98L-15.3 3.39A15.67 15.67 0 0 0 -13.9 7.24ZM-18.23 2.4A18.39 18.39 0 0 1 -18.23 -2.4L-15.54 -2.05A15.67 15.67 0 0 0 -15.54 2.05ZM-17.95 -3.98A18.39 18.39 0 0 1 -16.31 -8.49L-13.9 -7.24A15.67 15.67 0 0 0 -15.3 -3.39ZM-15.51 -9.88A18.39 18.39 0 0 1 -12.42 -13.56L-10.59 -11.55A15.67 15.67 0 0 0 -13.22 -8.42ZM-11.19 -14.59A18.39 18.39 0 0 1 -7.04 -16.99L-6 -14.48A15.67 15.67 0 0 0 -9.54 -12.43ZM-5.53 -17.54A18.39 18.39 0 0 1 -0.8 -18.37L-0.68 -15.65A15.67 15.67 0 0 0 -4.71 -14.94ZM0.8 -18.37A18.39 18.39 0 0 1 5.53 -17.54L4.71 -14.94A15.67 15.67 0 0 0 0.68 -15.65ZM7.04 -16.99A18.39 18.39 0 0 1 11.19 -14.59L9.54 -12.43A15.67 15.67 0 0 0 6 -14.48ZM12.42 -13.56A18.39 18.39 0 0 1 15.51 -9.88L13.22 -8.42A15.67 15.67 0 0 0 10.59 -11.55ZM16.31 -8.49A18.39 18.39 0 0 1 17.95 -3.98L15.3 -3.39A15.67 15.67 0 0 0 13.9 -7.24ZM18.23 -2.4A18.39 18.39 0 0 1 18.23 2.4L15.54 2.05A15.67 15.67 0 0 0 15.54 -2.05ZM17.95 3.98A18.39 18.39 0 0 1 16.31 8.49L13.9 7.24A15.67 15.67 0 0 0 15.3 3.39ZM15.51 9.88A18.39 18.39 0 0 1 12.42 13.56L10.59 11.55A15.67 15.67 0 0 0 13.22 8.42Z"/><path d="M-7.96 11.14h2.72v2.72h-2.72zM-3.56 11.14h2.72v2.72h-2.72zM0.84 11.14h2.72v2.72h-2.72zM5.24 11.14h2.72v2.72h-2.72z"/><path d="M-0.91 -19.68L0.91 -19.68L1.55 -2.59C3.63 -1.29 3.37 4.14 0 4.14C-3.37 4.14 -3.63 -1.29 -1.55 -2.59Z"/><circle cy="1.04" r="1.04" stroke-width="0.6"/></g>
<g transform="translate(938.9 191.9)" fill="none" stroke="#404040" stroke-width="0.7" opacity="1"><circle r="25.9" stroke="#444" stroke-width="0.55"/><circle r="21.11" stroke="#444" stroke-width="0.7150000000000001"/><path d="M-12.42 13.56A18.39 18.39 0 0 1 -15.51 9.88L-13.22 8.42A15.67 15.67 0 0 0 -10.59 11.55ZM-16.31 8.49A18.39 18.39 0 0 1 -17.95 3.98L-15.3 3.39A15.67 15.67 0 0 0 -13.9 7.24ZM-18.23 2.4A18.39 18.39 0 0 1 -18.23 -2.4L-15.54 -2.05A15.67 15.67 0 0 0 -15.54 2.05ZM-17.95 -3.98A18.39 18.39 0 0 1 -16.31 -8.49L-13.9 -7.24A15.67 15.67 0 0 0 -15.3 -3.39ZM-15.51 -9.88A18.39 18.39 0 0 1 -12.42 -13.56L-10.59 -11.55A15.67 15.67 0 0 0 -13.22 -8.42ZM-11.19 -14.59A18.39 18.39 0 0 1 -7.04 -16.99L-6 -14.48A15.67 15.67 0 0 0 -9.54 -12.43ZM-5.53 -17.54A18.39 18.39 0 0 1 -0.8 -18.37L-0.68 -15.65A15.67 15.67 0 0 0 -4.71 -14.94ZM0.8 -18.37A18.39 18.39 0 0 1 5.53 -17.54L4.71 -14.94A15.67 15.67 0 0 0 0.68 -15.65ZM7.04 -16.99A18.39 18.39 0 0 1 11.19 -14.59L9.54 -12.43A15.67 15.67 0 0 0 6 -14.48ZM12.42 -13.56A18.39 18.39 0 0 1 15.51 -9.88L13.22 -8.42A15.67 15.67 0 0 0 10.59 -11.55ZM16.31 -8.49A18.39 18.39 0 0 1 17.95 -3.98L15.3 -3.39A15.67 15.67 0 0 0 13.9 -7.24ZM18.23 -2.4A18.39 18.39 0 0 1 18.23 2.4L15.54 2.05A15.67 15.67 0 0 0 15.54 -2.05ZM17.95 3.98A18.39 18.39 0 0 1 16.31 8.49L13.9 7.24A15.67 15.67 0 0 0 15.3 3.39ZM15.51 9.88A18.39 18.39 0 0 1 12.42 13.56L10.59 11.55A15.67 15.67 0 0 0 13.22 8.42Z"/></g>
<g transform="translate(1057.6 193.9)" fill="none" stroke="#1a1a1a" stroke-width="1.0" opacity="1"><circle r="26.1" stroke="#333" stroke-width="0.6"/><circle r="21.27" stroke="#333" stroke-width="0.78"/><path d="M-12.52 13.66A18.53 18.53 0 0 1 -15.63 9.96L-13.32 8.48A15.79 15.79 0 0 0 -10.67 11.64ZM-16.44 8.56A18.53 18.53 0 0 1 -18.09 4.01L-15.42 3.42A15.79 15.79 0 0 0 -14.01 7.29ZM-18.37 2.42A18.53 18.53 0 0 1 -18.37 -2.42L-15.66 -2.06A15.79 15.79 0 0 0 -15.66 2.06ZM-18.09 -4.01A18.53 18.53 0 0 1 -16.44 -8.56L-14.01 -7.29A15.79 15.79 0 0 0 -15.42 -3.42ZM-15.63 -9.96A18.53 18.53 0 0 1 -12.52 -13.66L-10.67 -11.64A15.79 15.79 0 0 0 -13.32 -8.48ZM-11.28 -14.7A18.53 18.53 0 0 1 -7.09 -17.12L-6.04 -14.59A15.79 15.79 0 0 0 -9.61 -12.53ZM-5.57 -17.67A18.53 18.53 0 0 1 -0.81 -18.51L-0.69 -15.78A15.79 15.79 0 0 0 -4.75 -15.06ZM0.81 -18.51A18.53 18.53 0 0 1 5.57 -17.67L4.75 -15.06A15.79 15.79 0 0 0 0.69 -15.78ZM7.09 -17.12A18.53 18.53 0 0 1 11.28 -14.7L9.61 -12.53A15.79 15.79 0 0 0 6.04 -14.59ZM12.52 -13.66A18.53 18.53 0 0 1 15.63 -9.96L13.32 -8.48A15.79 15.79 0 0 0 10.67 -11.64ZM16.44 -8.56A18.53 18.53 0 0 1 18.09 -4.01L15.42 -3.42A15.79 15.79 0 0 0 14.01 -7.29ZM18.37 -2.42A18.53 18.53 0 0 1 18.37 2.42L15.66 2.06A15.79 15.79 0 0 0 15.66 -2.06ZM18.09 4.01A18.53 18.53 0 0 1 16.44 8.56L14.01 7.29A15.79 15.79 0 0 0 15.42 3.42ZM15.63 9.96A18.53 18.53 0 0 1 12.52 13.66L10.67 11.64A15.79 15.79 0 0 0 13.32 8.48Z"/><path d="M-8.03 11.22h2.74v2.74h-2.74zM-3.59 11.22h2.74v2.74h-2.74zM0.85 11.22h2.74v2.74h-2.74zM5.29 11.22h2.74v2.74h-2.74z"/><path d="M-0.91 -19.84L0.91 -19.84L1.57 -2.61C3.65 -1.31 3.39 4.18 0 4.18C-3.39 4.18 -3.65 -1.31 -1.57 -2.61Z"/><circle cy="1.04" r="1.04" stroke-width="0.6"/></g>
<path d="M1147.3 177.300L1150 195.800A2.800 2.800 0 1 1 1144.600 195.800Z" fill="none" stroke="#2e2e2e" stroke-width=".7"/>
<g transform="translate(906 257.9)" fill="none" stroke="#2c2c2c" stroke-width="0.8" opacity="1"><circle r="26" stroke="#3a3a3a" stroke-width="0.55"/><circle r="21.19" stroke="#3a3a3a" stroke-width="0.7150000000000001"/><path d="M-12.47 13.61A18.46 18.46 0 0 1 -15.57 9.92L-13.27 8.45A15.73 15.73 0 0 0 -10.63 11.6ZM-16.37 8.52A18.46 18.46 0 0 1 -18.02 4L-15.36 3.4A15.73 15.73 0 0 0 -13.95 7.26ZM-18.3 2.41A18.46 18.46 0 0 1 -18.3 -2.41L-15.6 -2.05A15.73 15.73 0 0 0 -15.6 2.05ZM-18.02 -4A18.46 18.46 0 0 1 -16.37 -8.52L-13.95 -7.26A15.73 15.73 0 0 0 -15.36 -3.4ZM-15.57 -9.92A18.46 18.46 0 0 1 -12.47 -13.61L-10.63 -11.6A15.73 15.73 0 0 0 -13.27 -8.45ZM-11.24 -14.65A18.46 18.46 0 0 1 -7.06 -17.05L-6.02 -14.53A15.73 15.73 0 0 0 -9.58 -12.48ZM-5.55 -17.61A18.46 18.46 0 0 1 -0.81 -18.44L-0.69 -15.72A15.73 15.73 0 0 0 -4.73 -15ZM0.81 -18.44A18.46 18.46 0 0 1 5.55 -17.61L4.73 -15A15.73 15.73 0 0 0 0.69 -15.72ZM7.06 -17.05A18.46 18.46 0 0 1 11.24 -14.65L9.58 -12.48A15.73 15.73 0 0 0 6.02 -14.53ZM12.47 -13.61A18.46 18.46 0 0 1 15.57 -9.92L13.27 -8.45A15.73 15.73 0 0 0 10.63 -11.6ZM16.37 -8.52A18.46 18.46 0 0 1 18.02 -4L15.36 -3.4A15.73 15.73 0 0 0 13.95 -7.26ZM18.3 -2.41A18.46 18.46 0 0 1 18.3 2.41L15.6 2.05A15.73 15.73 0 0 0 15.6 -2.05ZM18.02 4A18.46 18.46 0 0 1 16.37 8.52L13.95 7.26A15.73 15.73 0 0 0 15.36 3.4ZM15.57 9.92A18.46 18.46 0 0 1 12.47 13.61L10.63 11.6A15.73 15.73 0 0 0 13.27 8.45Z"/><path d="M-8 11.18h2.73v2.73h-2.73zM-3.58 11.18h2.73v2.73h-2.73zM0.84 11.18h2.73v2.73h-2.73zM5.26 11.18h2.73v2.73h-2.73z"/><path d="M0 -19.76L2.6 -0.52C3.38 4.16 -3.38 4.16 -2.6 -0.52Z"/><circle cy="1.04" r="1.04" stroke-width="0.48"/></g>
<g transform="translate(1027 255.9)"><circle r="25.8" fill="#cfd0d2"/><circle r="21.16" fill="#ddf1fc"/><path d="M-15.2 7.95A17.16 17.16 0 0 1 -16.76 3.68M-17.01 2.27A17.16 17.16 0 0 1 -17.01 -2.27M-16.76 -3.68A17.16 17.16 0 0 1 -15.2 -7.95M-14.49 -9.19A17.16 17.16 0 0 1 -11.57 -12.67M-10.47 -13.59A17.16 17.16 0 0 1 -6.54 -15.86M-5.19 -16.35A17.16 17.16 0 0 1 -0.72 -17.14M0.72 -17.14A17.16 17.16 0 0 1 5.19 -16.35" fill="none" stroke="#d4d6d8" stroke-width="3.23"/><path d="M6.54 -15.86A17.16 17.16 0 0 1 10.47 -13.59" fill="none" stroke="#f7941e" stroke-width="3.23"/><path d="M11.57 -12.67A17.16 17.16 0 0 1 14.49 -9.19" fill="none" stroke="#f15a29" stroke-width="3.23"/><path d="M15.2 -7.95A17.16 17.16 0 0 1 16.76 -3.68" fill="none" stroke="#ef4136" stroke-width="3.23"/><path d="M17.01 -2.27A17.16 17.16 0 0 1 17.01 2.27" fill="none" stroke="#ed1c24" stroke-width="3.23"/><path d="M16.76 3.68A17.16 17.16 0 0 1 15.2 7.95" fill="none" stroke="#be1e2d" stroke-width="3.23"/><path d="M-7.93 11.35h2.71v2.71h-2.71zM-3.55 11.35h2.71v2.71h-2.71zM0.84 11.35h2.71v2.71h-2.71zM5.22 11.35h2.71v2.71h-2.71z" fill="#000"/><path d="M0 -19.61L2.89 0.9A2.89 2.89 0 1 1 -2.89 0.9Z" fill="url(#ndl2)"/><circle cy="0.9" r="1.03" fill="#9fb8c8"/></g>
<g transform="translate(1102 255.2)"><circle r="25.8" fill="#e9e9ea"/><circle r="21.16" fill="#58595b"/><path d="M-15.2 7.95A17.16 17.16 0 0 1 -16.76 3.68M-17.01 2.27A17.16 17.16 0 0 1 -17.01 -2.27M-16.76 -3.68A17.16 17.16 0 0 1 -15.2 -7.95M-14.49 -9.19A17.16 17.16 0 0 1 -11.57 -12.67M-10.47 -13.59A17.16 17.16 0 0 1 -6.54 -15.86M-5.19 -16.35A17.16 17.16 0 0 1 -0.72 -17.14M0.72 -17.14A17.16 17.16 0 0 1 5.19 -16.35" fill="none" stroke="#bcbec0" stroke-width="3.23"/><path d="M6.54 -15.86A17.16 17.16 0 0 1 10.47 -13.59" fill="none" stroke="#f7941e" stroke-width="3.23"/><path d="M11.57 -12.67A17.16 17.16 0 0 1 14.49 -9.19" fill="none" stroke="#f7941e" stroke-width="3.23"/><path d="M15.2 -7.95A17.16 17.16 0 0 1 16.76 -3.68" fill="none" stroke="#f7941e" stroke-width="3.23"/><path d="M17.01 -2.27A17.16 17.16 0 0 1 17.01 2.27" fill="none" stroke="#ef4136" stroke-width="3.23"/><path d="M16.76 3.68A17.16 17.16 0 0 1 15.2 7.95" fill="none" stroke="#ed1c24" stroke-width="3.23"/><path d="M-7.93 11.35h2.71v2.71h-2.71zM-3.55 11.35h2.71v2.71h-2.71zM0.84 11.35h2.71v2.71h-2.71zM5.22 11.35h2.71v2.71h-2.71z" fill="#808285"/><path d="M0 -19.61L2.89 0.9A2.89 2.89 0 1 1 -2.89 0.9Z" fill="#939598"/><circle cy="0.9" r="1.03" fill="#222"/></g>
<g transform="translate(1252 258.1)" fill="none" stroke="#2c2c2c" stroke-width="0.8" opacity="1"><circle r="25.7" stroke="#3a3a3a" stroke-width="0.55"/><circle r="20.95" stroke="#3a3a3a" stroke-width="0.7150000000000001"/><path d="M-16.19 8.43A18.25 18.25 0 0 1 -17.81 3.95L-15.18 3.37A15.55 15.55 0 0 0 -13.79 7.18ZM-18.09 2.38A18.25 18.25 0 0 1 -18.09 -2.38L-15.42 -2.03A15.55 15.55 0 0 0 -15.42 2.03ZM-17.81 -3.95A18.25 18.25 0 0 1 -16.19 -8.43L-13.79 -7.18A15.55 15.55 0 0 0 -15.18 -3.37ZM-15.39 -9.8A18.25 18.25 0 0 1 -12.33 -13.45L-10.5 -11.46A15.55 15.55 0 0 0 -13.11 -8.35ZM-11.11 -14.48A18.25 18.25 0 0 1 -6.98 -16.86L-5.95 -14.36A15.55 15.55 0 0 0 -9.47 -12.34ZM-5.49 -17.4A18.25 18.25 0 0 1 -0.8 -18.23L-0.68 -15.53A15.55 15.55 0 0 0 -4.68 -14.83ZM0.8 -18.23A18.25 18.25 0 0 1 5.49 -17.4L4.68 -14.83A15.55 15.55 0 0 0 0.68 -15.53ZM6.98 -16.86A18.25 18.25 0 0 1 11.11 -14.48L9.47 -12.34A15.55 15.55 0 0 0 5.95 -14.36ZM12.33 -13.45A18.25 18.25 0 0 1 15.39 -9.8L13.11 -8.35A15.55 15.55 0 0 0 10.5 -11.46ZM16.19 -8.43A18.25 18.25 0 0 1 17.81 -3.95L15.18 -3.37A15.55 15.55 0 0 0 13.79 -7.18ZM18.09 -2.38A18.25 18.25 0 0 1 18.09 2.38L15.42 2.03A15.55 15.55 0 0 0 15.42 -2.03ZM17.81 3.95A18.25 18.25 0 0 1 16.19 8.43L13.79 7.18A15.55 15.55 0 0 0 15.18 3.37Z"/><path d="M-7.9 11.05h2.7v2.7h-2.7zM-3.53 11.05h2.7v2.7h-2.7zM0.84 11.05h2.7v2.7h-2.7zM5.2 11.05h2.7v2.7h-2.7z"/><path d="M0 -19.53L2.57 -0.51C3.34 4.11 -3.34 4.11 -2.57 -0.51Z"/><circle cy="1.03" r="1.03" stroke-width="0.48"/></g>
<g transform="translate(1032.5 330.8)"><circle r="25.6" fill="#bcbec0"/><circle r="20.99" fill="#58595b"/><path d="M-15.09 7.89A17.02 17.02 0 0 1 -16.63 3.66M-16.87 2.25A17.02 17.02 0 0 1 -16.87 -2.25M-16.63 -3.66A17.02 17.02 0 0 1 -15.09 -7.89M-14.37 -9.12A17.02 17.02 0 0 1 -11.48 -12.57M-10.39 -13.49A17.02 17.02 0 0 1 -6.49 -15.74M-5.15 -16.23A17.02 17.02 0 0 1 -0.71 -17.01M0.71 -17.01A17.02 17.02 0 0 1 5.15 -16.23" fill="none" stroke="#d1d3d4" stroke-width="3.2"/><path d="M6.49 -15.74A17.02 17.02 0 0 1 10.39 -13.49" fill="none" stroke="#f7941e" stroke-width="3.2"/><path d="M11.48 -12.57A17.02 17.02 0 0 1 14.37 -9.12" fill="none" stroke="#f7941e" stroke-width="3.2"/><path d="M15.09 -7.89A17.02 17.02 0 0 1 16.63 -3.66" fill="none" stroke="#f7941e" stroke-width="3.2"/><path d="M16.87 -2.25A17.02 17.02 0 0 1 16.87 2.25" fill="none" stroke="#ef4136" stroke-width="3.2"/><path d="M16.63 3.66A17.02 17.02 0 0 1 15.09 7.89" fill="none" stroke="#ed1c24" stroke-width="3.2"/><path d="M-7.87 11.26h2.69v2.69h-2.69zM-3.52 11.26h2.69v2.69h-2.69zM0.83 11.26h2.69v2.69h-2.69zM5.18 11.26h2.69v2.69h-2.69z" fill="#939598"/><path d="M0 -19.46L2.87 0.9A2.87 2.87 0 1 1 -2.87 0.9Z" fill="#e6e7e8"/><circle cy="0.9" r="1.02" fill="#222"/></g>
<g transform="translate(873.2 341.8)"><circle r="17.1" fill="#f1f2f2"/><circle r="14.02" fill="#58595b"/><path d="M-10.08 5.27A11.37 11.37 0 0 1 -11.11 2.44M-11.27 1.5A11.37 11.37 0 0 1 -11.27 -1.5M-11.11 -2.44A11.37 11.37 0 0 1 -10.08 -5.27M-9.6 -6.09A11.37 11.37 0 0 1 -7.67 -8.4M-6.94 -9.01A11.37 11.37 0 0 1 -4.33 -10.51M-3.44 -10.84A11.37 11.37 0 0 1 -0.48 -11.36M0.48 -11.36A11.37 11.37 0 0 1 3.44 -10.84" fill="none" stroke="#bcbec0" stroke-width="2.14"/><path d="M4.33 -10.51A11.37 11.37 0 0 1 6.94 -9.01" fill="none" stroke="#f7941e" stroke-width="2.14"/><path d="M7.67 -8.4A11.37 11.37 0 0 1 9.6 -6.09" fill="none" stroke="#f15a29" stroke-width="2.14"/><path d="M10.08 -5.27A11.37 11.37 0 0 1 11.11 -2.44" fill="none" stroke="#ef4136" stroke-width="2.14"/><path d="M11.27 -1.5A11.37 11.37 0 0 1 11.27 1.5" fill="none" stroke="#ed1c24" stroke-width="2.14"/><path d="M11.11 2.44A11.37 11.37 0 0 1 10.08 5.27" fill="none" stroke="#be1e2d" stroke-width="2.14"/><path d="M-5.26 7.52h1.8v1.8h-1.8zM-2.35 7.52h1.8v1.8h-1.8zM0.56 7.52h1.8v1.8h-1.8zM3.46 7.52h1.8v1.8h-1.8z" fill="#939598"/><path d="M0 -13L1.92 0.6A1.92 1.92 0 1 1 -1.92 0.6Z" fill="#bcbec0"/></g>
<text x="1159.4" y="411.8" font-size="14.4" fill="#000" textLength="112.6" lengthAdjust="spacingAndGlyphs" opacity=".99">HTML5 Speedtest</text>
<g transform="translate(508.2 524.9)"><circle r="32" fill="#d1d3d4"/><circle r="26.24" fill="#595959"/><path d="M-18.86 9.86A21.28 21.28 0 0 1 -20.78 4.57M-21.09 2.81A21.28 21.28 0 0 1 -21.09 -2.81M-20.78 -4.57A21.28 21.28 0 0 1 -18.86 -9.86M-17.97 -11.4A21.28 21.28 0 0 1 -14.35 -15.71M-12.98 -16.86A21.28 21.28 0 0 1 -8.11 -19.67M-6.43 -20.28A21.28 21.28 0 0 1 -0.89 -21.26M0.89 -21.26A21.28 21.28 0 0 1 6.43 -20.28" fill="none" stroke="#e0e1e2" stroke-width="4"/><path d="M8.11 -19.67A21.28 21.28 0 0 1 12.98 -16.86" fill="none" stroke="#f7941e" stroke-width="4"/><path d="M14.35 -15.71A21.28 21.28 0 0 1 17.97 -11.4" fill="none" stroke="#f15a29" stroke-width="4"/><path d="M18.86 -9.86A21.28 21.28 0 0 1 20.78 -4.57" fill="none" stroke="#ef4136" stroke-width="4"/><path d="M21.09 -2.81A21.28 21.28 0 0 1 21.09 2.81" fill="none" stroke="#ed1c24" stroke-width="4"/><path d="M20.78 4.57A21.28 21.28 0 0 1 18.86 9.86" fill="none" stroke="#be1e2d" stroke-width="4"/><path d="M-9.84 14.08h3.36v3.36h-3.36zM-4.4 14.08h3.36v3.36h-3.36zM1.04 14.08h3.36v3.36h-3.36zM6.48 14.08h3.36v3.36h-3.36z" fill="#e0e1e2"/><path d="M0 -24.32L3.58 1.12A3.58 3.58 0 1 1 -3.58 1.12Z" fill="url(#ndl)"/><circle cy="1.12" r="1.12" fill="#dfeefa"/></g>
<g transform="translate(508.2 599.7)"><circle r="32" fill="#000"/><circle r="26.24" fill="#595959"/><path d="M-18.86 9.86A21.28 21.28 0 0 1 -20.78 4.57M-21.09 2.81A21.28 21.28 0 0 1 -21.09 -2.81M-20.78 -4.57A21.28 21.28 0 0 1 -18.86 -9.86M-17.97 -11.4A21.28 21.28 0 0 1 -14.35 -15.71M-12.98 -16.86A21.28 21.28 0 0 1 -8.11 -19.67M-6.43 -20.28A21.28 21.28 0 0 1 -0.89 -21.26M0.89 -21.26A21.28 21.28 0 0 1 6.43 -20.28M8.11 -19.67A21.28 21.28 0 0 1 12.98 -16.86M14.35 -15.71A21.28 21.28 0 0 1 17.97 -11.4M18.86 -9.86A21.28 21.28 0 0 1 20.78 -4.57M21.09 -2.81A21.28 21.28 0 0 1 21.09 2.81M20.78 4.57A21.28 21.28 0 0 1 18.86 9.86" fill="none" stroke="#000" stroke-width="4"/><path d="M-9.84 14.08h3.36v3.36h-3.36zM-4.4 14.08h3.36v3.36h-3.36zM1.04 14.08h3.36v3.36h-3.36zM6.48 14.08h3.36v3.36h-3.36z" fill="#000"/><path d="M0 -24.32L3.58 1.12A3.58 3.58 0 1 1 -3.58 1.12Z" fill="#000"/></g>
<g transform="translate(509.2 678.6)"><circle r="32.2" fill="#fff"/><circle r="26.4" fill="#595959"/><path d="M-18.98 9.92A21.41 21.41 0 0 1 -20.91 4.6M-21.22 2.83A21.41 21.41 0 0 1 -21.22 -2.83M-20.91 -4.6A21.41 21.41 0 0 1 -18.98 -9.92M-18.08 -11.47A21.41 21.41 0 0 1 -14.44 -15.81M-13.07 -16.97A21.41 21.41 0 0 1 -8.16 -19.8M-6.47 -20.41A21.41 21.41 0 0 1 -0.9 -21.39M0.9 -21.39A21.41 21.41 0 0 1 6.47 -20.41M8.16 -19.8A21.41 21.41 0 0 1 13.07 -16.97M14.44 -15.81A21.41 21.41 0 0 1 18.08 -11.47M18.98 -9.92A21.41 21.41 0 0 1 20.91 -4.6M21.22 -2.83A21.41 21.41 0 0 1 21.22 2.83M20.91 4.6A21.41 21.41 0 0 1 18.98 9.92" fill="none" stroke="#fff" stroke-width="4.03"/><path d="M-9.9 14.17h3.38v3.38h-3.38zM-4.43 14.17h3.38v3.38h-3.38zM1.05 14.17h3.38v3.38h-3.38zM6.52 14.17h3.38v3.38h-3.38z" fill="#fff"/><path d="M0 -24.47L3.61 1.13A3.61 3.61 0 1 1 -3.61 1.13Z" fill="#fff"/></g>
<g transform="translate(578.5 524.9)"><circle r="24.3" fill="#d1d3d4"/><circle r="19.93" fill="#595959"/><path d="M-14.32 7.49A16.16 16.16 0 0 1 -15.78 3.47M-16.02 2.14A16.16 16.16 0 0 1 -16.02 -2.14M-15.78 -3.47A16.16 16.16 0 0 1 -14.32 -7.49M-13.64 -8.66A16.16 16.16 0 0 1 -10.9 -11.93M-9.86 -12.8A16.16 16.16 0 0 1 -6.16 -14.94M-4.89 -15.4A16.16 16.16 0 0 1 -0.68 -16.15M0.68 -16.15A16.16 16.16 0 0 1 4.89 -15.4" fill="none" stroke="#e0e1e2" stroke-width="3.04"/><path d="M6.16 -14.94A16.16 16.16 0 0 1 9.86 -12.8" fill="none" stroke="#f7941e" stroke-width="3.04"/><path d="M10.9 -11.93A16.16 16.16 0 0 1 13.64 -8.66" fill="none" stroke="#f15a29" stroke-width="3.04"/><path d="M14.32 -7.49A16.16 16.16 0 0 1 15.78 -3.47" fill="none" stroke="#ef4136" stroke-width="3.04"/><path d="M16.02 -2.14A16.16 16.16 0 0 1 16.02 2.14" fill="none" stroke="#ed1c24" stroke-width="3.04"/><path d="M15.78 3.47A16.16 16.16 0 0 1 14.32 7.49" fill="none" stroke="#be1e2d" stroke-width="3.04"/><path d="M-7.47 10.69h2.55v2.55h-2.55zM-3.34 10.69h2.55v2.55h-2.55zM0.79 10.69h2.55v2.55h-2.55zM4.92 10.69h2.55v2.55h-2.55z" fill="#e0e1e2"/><path d="M0 -18.47L2.72 0.85A2.72 2.72 0 1 1 -2.72 0.85Z" fill="url(#ndl)"/><circle cy="0.85" r="0.85" fill="#dfeefa"/></g>
<g transform="translate(578.5 599.7)"><circle r="24.3" fill="#000"/><circle r="19.93" fill="#595959"/><path d="M-14.32 7.49A16.16 16.16 0 0 1 -15.78 3.47M-16.02 2.14A16.16 16.16 0 0 1 -16.02 -2.14M-15.78 -3.47A16.16 16.16 0 0 1 -14.32 -7.49M-13.64 -8.66A16.16 16.16 0 0 1 -10.9 -11.93M-9.86 -12.8A16.16 16.16 0 0 1 -6.16 -14.94M-4.89 -15.4A16.16 16.16 0 0 1 -0.68 -16.15M0.68 -16.15A16.16 16.16 0 0 1 4.89 -15.4M6.16 -14.94A16.16 16.16 0 0 1 9.86 -12.8M10.9 -11.93A16.16 16.16 0 0 1 13.64 -8.66M14.32 -7.49A16.16 16.16 0 0 1 15.78 -3.47M16.02 -2.14A16.16 16.16 0 0 1 16.02 2.14M15.78 3.47A16.16 16.16 0 0 1 14.32 7.49" fill="none" stroke="#000" stroke-width="3.04"/><path d="M-7.47 10.69h2.55v2.55h-2.55zM-3.34 10.69h2.55v2.55h-2.55zM0.79 10.69h2.55v2.55h-2.55zM4.92 10.69h2.55v2.55h-2.55z" fill="#000"/><path d="M0 -18.47L2.72 0.85A2.72 2.72 0 1 1 -2.72 0.85Z" fill="#000"/></g>
<g transform="translate(579.5 678.6)"><circle r="24.5" fill="#fff"/><circle r="20.09" fill="#595959"/><path d="M-14.44 7.55A16.29 16.29 0 0 1 -15.91 3.5M-16.15 2.15A16.29 16.29 0 0 1 -16.15 -2.15M-15.91 -3.5A16.29 16.29 0 0 1 -14.44 -7.55M-13.76 -8.73A16.29 16.29 0 0 1 -10.99 -12.03M-9.94 -12.91A16.29 16.29 0 0 1 -6.21 -15.06M-4.93 -15.53A16.29 16.29 0 0 1 -0.68 -16.28M0.68 -16.28A16.29 16.29 0 0 1 4.93 -15.53M6.21 -15.06A16.29 16.29 0 0 1 9.94 -12.91M10.99 -12.03A16.29 16.29 0 0 1 13.76 -8.73M14.44 -7.55A16.29 16.29 0 0 1 15.91 -3.5M16.15 -2.15A16.29 16.29 0 0 1 16.15 2.15M15.91 3.5A16.29 16.29 0 0 1 14.44 7.55" fill="none" stroke="#fff" stroke-width="3.06"/><path d="M-7.53 10.78h2.57v2.57h-2.57zM-3.37 10.78h2.57v2.57h-2.57zM0.8 10.78h2.57v2.57h-2.57zM4.96 10.78h2.57v2.57h-2.57z" fill="#fff"/><path d="M0 -18.62L2.74 0.86A2.74 2.74 0 1 1 -2.74 0.86Z" fill="#fff"/></g>
<g transform="translate(638.4 524.9)"><circle r="16.4" fill="#d1d3d4"/><circle r="13.45" fill="#595959"/><path d="M-9.66 5.05A10.91 10.91 0 0 1 -10.65 2.34M-10.81 1.44A10.91 10.91 0 0 1 -10.81 -1.44M-10.65 -2.34A10.91 10.91 0 0 1 -9.66 -5.05M-9.21 -5.84A10.91 10.91 0 0 1 -7.35 -8.05M-6.65 -8.64A10.91 10.91 0 0 1 -4.16 -10.08M-3.3 -10.4A10.91 10.91 0 0 1 -0.46 -10.9M0.46 -10.9A10.91 10.91 0 0 1 3.3 -10.4" fill="none" stroke="#e0e1e2" stroke-width="2.05"/><path d="M4.16 -10.08A10.91 10.91 0 0 1 6.65 -8.64" fill="none" stroke="#f7941e" stroke-width="2.05"/><path d="M7.35 -8.05A10.91 10.91 0 0 1 9.21 -5.84" fill="none" stroke="#f15a29" stroke-width="2.05"/><path d="M9.66 -5.05A10.91 10.91 0 0 1 10.65 -2.34" fill="none" stroke="#ef4136" stroke-width="2.05"/><path d="M10.81 -1.44A10.91 10.91 0 0 1 10.81 1.44" fill="none" stroke="#ed1c24" stroke-width="2.05"/><path d="M10.65 2.34A10.91 10.91 0 0 1 9.66 5.05" fill="none" stroke="#be1e2d" stroke-width="2.05"/><path d="M-5.04 7.22h1.72v1.72h-1.72zM-2.25 7.22h1.72v1.72h-1.72zM0.53 7.22h1.72v1.72h-1.72zM3.32 7.22h1.72v1.72h-1.72z" fill="#e0e1e2"/><path d="M0 -12.46L1.84 0.57A1.84 1.84 0 1 1 -1.84 0.57Z" fill="url(#ndl)"/><circle cy="0.57" r="0.57" fill="#dfeefa"/></g>
<g transform="translate(638.4 599.7)"><circle r="16.4" fill="#000"/><circle r="13.45" fill="#595959"/><path d="M-9.66 5.05A10.91 10.91 0 0 1 -10.65 2.34M-10.81 1.44A10.91 10.91 0 0 1 -10.81 -1.44M-10.65 -2.34A10.91 10.91 0 0 1 -9.66 -5.05M-9.21 -5.84A10.91 10.91 0 0 1 -7.35 -8.05M-6.65 -8.64A10.91 10.91 0 0 1 -4.16 -10.08M-3.3 -10.4A10.91 10.91 0 0 1 -0.46 -10.9M0.46 -10.9A10.91 10.91 0 0 1 3.3 -10.4M4.16 -10.08A10.91 10.91 0 0 1 6.65 -8.64M7.35 -8.05A10.91 10.91 0 0 1 9.21 -5.84M9.66 -5.05A10.91 10.91 0 0 1 10.65 -2.34M10.81 -1.44A10.91 10.91 0 0 1 10.81 1.44M10.65 2.34A10.91 10.91 0 0 1 9.66 5.05" fill="none" stroke="#000" stroke-width="2.05"/><path d="M-5.04 7.22h1.72v1.72h-1.72zM-2.25 7.22h1.72v1.72h-1.72zM0.53 7.22h1.72v1.72h-1.72zM3.32 7.22h1.72v1.72h-1.72z" fill="#000"/><path d="M0 -12.46L1.84 0.57A1.84 1.84 0 1 1 -1.84 0.57Z" fill="#000"/></g>
<g transform="translate(639.4 678.6)"><circle r="16.6" fill="#fff"/><circle r="13.61" fill="#595959"/><path d="M-9.78 5.11A11.04 11.04 0 0 1 -10.78 2.37M-10.94 1.46A11.04 11.04 0 0 1 -10.94 -1.46M-10.78 -2.37A11.04 11.04 0 0 1 -9.78 -5.11M-9.32 -5.91A11.04 11.04 0 0 1 -7.44 -8.15M-6.74 -8.75A11.04 11.04 0 0 1 -4.21 -10.21M-3.34 -10.52A11.04 11.04 0 0 1 -0.46 -11.03M0.46 -11.03A11.04 11.04 0 0 1 3.34 -10.52M4.21 -10.21A11.04 11.04 0 0 1 6.74 -8.75M7.44 -8.15A11.04 11.04 0 0 1 9.32 -5.91M9.78 -5.11A11.04 11.04 0 0 1 10.78 -2.37M10.94 -1.46A11.04 11.04 0 0 1 10.94 1.46M10.78 2.37A11.04 11.04 0 0 1 9.78 5.11" fill="none" stroke="#fff" stroke-width="2.07"/><path d="M-5.1 7.3h1.74v1.74h-1.74zM-2.28 7.3h1.74v1.74h-1.74zM0.54 7.3h1.74v1.74h-1.74zM3.36 7.3h1.74v1.74h-1.74z" fill="#fff"/><path d="M0 -12.62L1.86 0.58A1.86 1.86 0 1 1 -1.86 0.58Z" fill="#fff"/></g>
<rect x="739.1" y="492.4" width="64.1" height="64.1" rx="12.18" fill="#000"/>
<g transform="translate(771.15 524.45)"><circle r="24.29" fill="#d1d3d4"/><circle r="19.44" fill="#000"/><path d="M-14.32 7.48A16.16 16.16 0 0 1 -15.78 3.47M-16.01 2.14A16.16 16.16 0 0 1 -16.01 -2.14M-15.78 -3.47A16.16 16.16 0 0 1 -14.32 -7.48M-13.64 -8.66A16.16 16.16 0 0 1 -10.89 -11.93M-9.86 -12.8A16.16 16.16 0 0 1 -6.16 -14.94M-4.88 -15.4A16.16 16.16 0 0 1 -0.68 -16.14M0.68 -16.14A16.16 16.16 0 0 1 4.88 -15.4" fill="none" stroke="#e6e7e8" stroke-width="2.67"/><path d="M6.16 -14.94A16.16 16.16 0 0 1 9.86 -12.8" fill="none" stroke="#f7941e" stroke-width="2.67"/><path d="M10.89 -11.93A16.16 16.16 0 0 1 13.64 -8.66" fill="none" stroke="#f15a29" stroke-width="2.67"/><path d="M14.32 -7.48A16.16 16.16 0 0 1 15.78 -3.47" fill="none" stroke="#ef4136" stroke-width="2.67"/><path d="M16.01 -2.14A16.16 16.16 0 0 1 16.01 2.14" fill="none" stroke="#ed1c24" stroke-width="2.67"/><path d="M15.78 3.47A16.16 16.16 0 0 1 14.32 7.48" fill="none" stroke="#be1e2d" stroke-width="2.67"/><path d="M-7.47 10.69h2.55v2.55h-2.55zM-3.34 10.69h2.55v2.55h-2.55zM0.79 10.69h2.55v2.55h-2.55zM4.92 10.69h2.55v2.55h-2.55z" fill="#e6e7e8"/><path d="M0 -18.46L2.43 0.85A2.43 2.43 0 1 1 -2.43 0.85Z" fill="url(#ndl)"/><circle cy="0.85" r="0.97" fill="#fff"/></g>
<rect x="828.4" y="498.3" width="48" height="48" rx="9.12" fill="#000"/>
<g transform="translate(852.4 522.3)"><circle r="18.19" fill="#d1d3d4"/><circle r="14.55" fill="#000"/><path d="M-10.72 5.6A12.1 12.1 0 0 1 -11.82 2.6M-11.99 1.6A12.1 12.1 0 0 1 -11.99 -1.6M-11.82 -2.6A12.1 12.1 0 0 1 -10.72 -5.6M-10.21 -6.48A12.1 12.1 0 0 1 -8.16 -8.93M-7.38 -9.58A12.1 12.1 0 0 1 -4.61 -11.18M-3.66 -11.53A12.1 12.1 0 0 1 -0.51 -12.09M0.51 -12.09A12.1 12.1 0 0 1 3.66 -11.53" fill="none" stroke="#e6e7e8" stroke-width="2"/><path d="M4.61 -11.18A12.1 12.1 0 0 1 7.38 -9.58" fill="none" stroke="#f7941e" stroke-width="2"/><path d="M8.16 -8.93A12.1 12.1 0 0 1 10.21 -6.48" fill="none" stroke="#f15a29" stroke-width="2"/><path d="M10.72 -5.6A12.1 12.1 0 0 1 11.82 -2.6" fill="none" stroke="#ef4136" stroke-width="2"/><path d="M11.99 -1.6A12.1 12.1 0 0 1 11.99 1.6" fill="none" stroke="#ed1c24" stroke-width="2"/><path d="M11.82 2.6A12.1 12.1 0 0 1 10.72 5.6" fill="none" stroke="#be1e2d" stroke-width="2"/><path d="M-5.59 8h1.91v1.91h-1.91zM-2.5 8h1.91v1.91h-1.91zM0.59 8h1.91v1.91h-1.91zM3.68 8h1.91v1.91h-1.91z" fill="#e6e7e8"/><path d="M0 -13.83L1.82 0.64A1.82 1.82 0 1 1 -1.82 0.64Z" fill="url(#ndl)"/><circle cy="0.64" r="0.73" fill="#fff"/></g>
<rect x="907.7" y="507" width="32.2" height="32.2" rx="6.12" fill="#000"/>
<g transform="translate(923.8 523.1)"><circle r="12.2" fill="#d1d3d4"/><circle r="9.76" fill="#000"/><path d="M-7.19 3.76A8.12 8.12 0 0 1 -7.93 1.74M-8.04 1.07A8.12 8.12 0 0 1 -8.04 -1.07M-7.93 -1.74A8.12 8.12 0 0 1 -7.19 -3.76M-6.85 -4.35A8.12 8.12 0 0 1 -5.47 -5.99M-4.95 -6.43A8.12 8.12 0 0 1 -3.09 -7.5M-2.45 -7.74A8.12 8.12 0 0 1 -0.34 -8.11M0.34 -8.11A8.12 8.12 0 0 1 2.45 -7.74" fill="none" stroke="#e6e7e8" stroke-width="1.34"/><path d="M3.09 -7.5A8.12 8.12 0 0 1 4.95 -6.43" fill="none" stroke="#f7941e" stroke-width="1.34"/><path d="M5.47 -5.99A8.12 8.12 0 0 1 6.85 -4.35" fill="none" stroke="#f15a29" stroke-width="1.34"/><path d="M7.19 -3.76A8.12 8.12 0 0 1 7.93 -1.74" fill="none" stroke="#ef4136" stroke-width="1.34"/><path d="M8.04 -1.07A8.12 8.12 0 0 1 8.04 1.07" fill="none" stroke="#ed1c24" stroke-width="1.34"/><path d="M7.93 1.74A8.12 8.12 0 0 1 7.19 3.76" fill="none" stroke="#be1e2d" stroke-width="1.34"/><path d="M-3.75 5.37h1.28v1.28h-1.28zM-1.68 5.37h1.28v1.28h-1.28zM0.4 5.37h1.28v1.28h-1.28zM2.47 5.37h1.28v1.28h-1.28z" fill="#e6e7e8"/><path d="M0 -9.27L1.22 0.43A1.22 1.22 0 1 1 -1.22 0.43Z" fill="url(#ndl)"/><circle cy="0.43" r="0.49" fill="#fff"/></g>
<rect x="738" y="577.6" width="63.9" height="63.9" rx="12.14" fill="#000"/>
<g transform="translate(769.95 609.55)"><circle r="24.09" fill="#fff"/><circle r="19.75" fill="#000"/><path d="M-14.2 7.42A16.02 16.02 0 0 1 -15.65 3.44M-15.88 2.12A16.02 16.02 0 0 1 -15.88 -2.12M-15.65 -3.44A16.02 16.02 0 0 1 -14.2 -7.42M-13.53 -8.58A16.02 16.02 0 0 1 -10.8 -11.83M-9.77 -12.69A16.02 16.02 0 0 1 -6.1 -14.81M-4.84 -15.27A16.02 16.02 0 0 1 -0.67 -16.01M0.67 -16.01A16.02 16.02 0 0 1 4.84 -15.27M6.1 -14.81A16.02 16.02 0 0 1 9.77 -12.69M10.8 -11.83A16.02 16.02 0 0 1 13.53 -8.58M14.2 -7.42A16.02 16.02 0 0 1 15.65 -3.44M15.88 -2.12A16.02 16.02 0 0 1 15.88 2.12M15.65 3.44A16.02 16.02 0 0 1 14.2 7.42" fill="none" stroke="#fff" stroke-width="2.65"/><path d="M-7.41 10.6h2.53v2.53h-2.53zM-3.31 10.6h2.53v2.53h-2.53zM0.78 10.6h2.53v2.53h-2.53zM4.88 10.6h2.53v2.53h-2.53z" fill="#fff"/><path d="M0 -18.31L2.29 0.84A2.29 2.29 0 1 1 -2.29 0.84Z" fill="#fff"/><circle cy="0.84" r="0.96" fill="#000"/></g>
<rect x="828.4" y="582.7" width="48" height="48" rx="9.12" fill="#000"/>
<g transform="translate(852.4 606.7)"><circle r="18.1" fill="#fff"/><circle r="14.84" fill="#000"/><path d="M-10.66 5.58A12.03 12.03 0 0 1 -11.75 2.58M-11.93 1.59A12.03 12.03 0 0 1 -11.93 -1.59M-11.75 -2.58A12.03 12.03 0 0 1 -10.66 -5.58M-10.16 -6.45A12.03 12.03 0 0 1 -8.11 -8.89M-7.34 -9.53A12.03 12.03 0 0 1 -4.59 -11.13M-3.64 -11.47A12.03 12.03 0 0 1 -0.5 -12.02M0.5 -12.02A12.03 12.03 0 0 1 3.64 -11.47M4.59 -11.13A12.03 12.03 0 0 1 7.34 -9.53M8.11 -8.89A12.03 12.03 0 0 1 10.16 -6.45M10.66 -5.58A12.03 12.03 0 0 1 11.75 -2.58M11.93 -1.59A12.03 12.03 0 0 1 11.93 1.59M11.75 2.58A12.03 12.03 0 0 1 10.66 5.58" fill="none" stroke="#fff" stroke-width="1.99"/><path d="M-5.56 7.96h1.9v1.9h-1.9zM-2.49 7.96h1.9v1.9h-1.9zM0.59 7.96h1.9v1.9h-1.9zM3.66 7.96h1.9v1.9h-1.9z" fill="#fff"/><path d="M0 -13.75L1.72 0.63A1.72 1.72 0 1 1 -1.72 0.63Z" fill="#fff"/><circle cy="0.63" r="0.72" fill="#000"/></g>
<rect x="907.3" y="585.3" width="32.5" height="32.5" rx="6.17" fill="#000"/>
<g transform="translate(923.55 601.55)"><circle r="12.25" fill="#fff"/><circle r="10.05" fill="#000"/><path d="M-7.22 3.77A8.15 8.15 0 0 1 -7.96 1.75M-8.08 1.08A8.15 8.15 0 0 1 -8.08 -1.08M-7.96 -1.75A8.15 8.15 0 0 1 -7.22 -3.77M-6.88 -4.37A8.15 8.15 0 0 1 -5.49 -6.02M-4.97 -6.46A8.15 8.15 0 0 1 -3.1 -7.53M-2.46 -7.77A8.15 8.15 0 0 1 -0.34 -8.14M0.34 -8.14A8.15 8.15 0 0 1 2.46 -7.77M3.1 -7.53A8.15 8.15 0 0 1 4.97 -6.46M5.49 -6.02A8.15 8.15 0 0 1 6.88 -4.37M7.22 -3.77A8.15 8.15 0 0 1 7.96 -1.75M8.08 -1.08A8.15 8.15 0 0 1 8.08 1.08M7.96 1.75A8.15 8.15 0 0 1 7.22 3.77" fill="none" stroke="#fff" stroke-width="1.35"/><path d="M-3.77 5.39h1.29v1.29h-1.29zM-1.68 5.39h1.29v1.29h-1.29zM0.4 5.39h1.29v1.29h-1.29zM2.48 5.39h1.29v1.29h-1.29z" fill="#fff"/><path d="M0 -9.31L1.16 0.43A1.16 1.16 0 1 1 -1.16 0.43Z" fill="#fff"/><circle cy="0.43" r="0.49" fill="#000"/></g>
<rect x="738" y="659.8" width="64.2" height="64.2" rx="12.2" fill="#fff"/>
<g transform="translate(770.1 691.9)"><circle r="24.2" fill="#000"/><circle r="20.09" fill="#fff"/><path d="M-14.26 7.46A16.1 16.1 0 0 1 -15.72 3.46M-15.95 2.13A16.1 16.1 0 0 1 -15.95 -2.13M-15.72 -3.46A16.1 16.1 0 0 1 -14.26 -7.46M-13.59 -8.62A16.1 16.1 0 0 1 -10.85 -11.89M-9.82 -12.75A16.1 16.1 0 0 1 -6.13 -14.88M-4.87 -15.34A16.1 16.1 0 0 1 -0.67 -16.08M0.67 -16.08A16.1 16.1 0 0 1 4.87 -15.34M6.13 -14.88A16.1 16.1 0 0 1 9.82 -12.75M10.85 -11.89A16.1 16.1 0 0 1 13.59 -8.62M14.26 -7.46A16.1 16.1 0 0 1 15.72 -3.46M15.95 -2.13A16.1 16.1 0 0 1 15.95 2.13M15.72 3.46A16.1 16.1 0 0 1 14.26 7.46" fill="none" stroke="#000" stroke-width="2.42"/><path d="M-7.44 10.65h2.54v2.54h-2.54zM-3.33 10.65h2.54v2.54h-2.54zM0.79 10.65h2.54v2.54h-2.54zM4.9 10.65h2.54v2.54h-2.54z" fill="#000"/><path d="M0 -18.39L2.18 0.85A2.18 2.18 0 1 1 -2.18 0.85Z" fill="#000"/><circle cy="0.85" r="0.97" fill="#fff"/></g>
<rect x="831.1" y="665.6" width="48.4" height="48.4" rx="9.2" fill="#fff"/>
<g transform="translate(855.3 689.8)"><circle r="18.25" fill="#000"/><circle r="15.14" fill="#fff"/><path d="M-10.75 5.62A12.13 12.13 0 0 1 -11.85 2.61M-12.03 1.6A12.13 12.13 0 0 1 -12.03 -1.6M-11.85 -2.61A12.13 12.13 0 0 1 -10.75 -5.62M-10.25 -6.5A12.13 12.13 0 0 1 -8.18 -8.96M-7.4 -9.61A12.13 12.13 0 0 1 -4.62 -11.22M-3.67 -11.57A12.13 12.13 0 0 1 -0.51 -12.12M0.51 -12.12A12.13 12.13 0 0 1 3.67 -11.57M4.62 -11.22A12.13 12.13 0 0 1 7.4 -9.61M8.18 -8.96A12.13 12.13 0 0 1 10.25 -6.5M10.75 -5.62A12.13 12.13 0 0 1 11.85 -2.61M12.03 -1.6A12.13 12.13 0 0 1 12.03 1.6M11.85 2.61A12.13 12.13 0 0 1 10.75 5.62" fill="none" stroke="#000" stroke-width="1.82"/><path d="M-5.61 8.03h1.92v1.92h-1.92zM-2.51 8.03h1.92v1.92h-1.92zM0.59 8.03h1.92v1.92h-1.92zM3.69 8.03h1.92v1.92h-1.92z" fill="#000"/><path d="M0 -13.87L1.64 0.64A1.64 1.64 0 1 1 -1.64 0.64Z" fill="#000"/><circle cy="0.64" r="0.73" fill="#fff"/></g>
<rect x="911.4" y="673.9" width="32.4" height="32.4" rx="6.16" fill="#fff"/>
<g transform="translate(927.6 690.1)"><circle r="12.21" fill="#000"/><circle r="10.14" fill="#fff"/><path d="M-7.2 3.76A8.12 8.12 0 0 1 -7.93 1.74M-8.05 1.07A8.12 8.12 0 0 1 -8.05 -1.07M-7.93 -1.74A8.12 8.12 0 0 1 -7.2 -3.76M-6.86 -4.35A8.12 8.12 0 0 1 -5.48 -6M-4.96 -6.44A8.12 8.12 0 0 1 -3.1 -7.51M-2.46 -7.74A8.12 8.12 0 0 1 -0.34 -8.12M0.34 -8.12A8.12 8.12 0 0 1 2.46 -7.74M3.1 -7.51A8.12 8.12 0 0 1 4.96 -6.44M5.48 -6A8.12 8.12 0 0 1 6.86 -4.35M7.2 -3.76A8.12 8.12 0 0 1 7.93 -1.74M8.05 -1.07A8.12 8.12 0 0 1 8.05 1.07M7.93 1.74A8.12 8.12 0 0 1 7.2 3.76" fill="none" stroke="#000" stroke-width="1.22"/><path d="M-3.76 5.37h1.28v1.28h-1.28zM-1.68 5.37h1.28v1.28h-1.28zM0.4 5.37h1.28v1.28h-1.28zM2.47 5.37h1.28v1.28h-1.28z" fill="#000"/><path d="M0 -9.28L1.1 0.43A1.1 1.1 0 1 1 -1.1 0.43Z" fill="#000"/><circle cy="0.43" r="0.49" fill="#fff"/></g>
</svg>
</div>
</div>
</body>
</html>
